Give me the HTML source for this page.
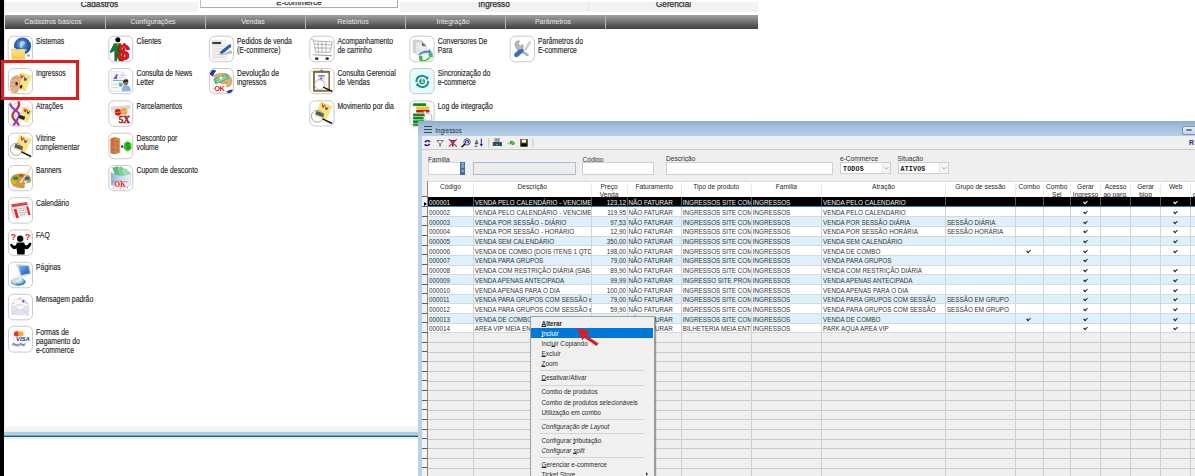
<!DOCTYPE html><html><head><meta charset="utf-8"><style>
*{margin:0;padding:0;box-sizing:border-box}
html,body{width:1195px;height:476px;overflow:hidden;background:#fff;font-family:"Liberation Sans", sans-serif;position:relative}
.a{position:absolute}
.t{position:absolute;white-space:nowrap;line-height:1}
.lbl{position:absolute;font-size:6.86px;line-height:7.4px;color:#262626;-webkit-text-stroke:0.12px #262626;white-space:nowrap;transform:scaleY(1.2);transform-origin:0 0}
.ib{position:absolute;width:25px;height:26px;border:1px solid #c9c9c9;border-radius:5px;background:#fff;overflow:hidden}
.ib svg{position:absolute;left:0;top:0}
.cat{position:absolute;top:15px;height:14px;font-size:7px;line-height:14px;color:#e4e8ec;text-align:center;padding-right:4px}
.row{position:absolute;left:427.5px;width:800px;height:9.72px}
.c{position:absolute;top:0;height:100%;font-size:6.3px;line-height:11.4px;color:#333;white-space:nowrap;overflow:hidden;padding-left:1.5px}
.hd{position:absolute;top:0;height:15.6px;font-size:6.6px;line-height:7.6px;color:#262626;text-align:center;padding-top:1.9px;overflow:hidden}
.mi{position:absolute;left:541.5px;font-size:6.4px;line-height:10px;color:#2b2b2b;white-space:nowrap;margin-top:1px}
.mi u{text-decoration-thickness:0.4px;text-underline-offset:0.3px}
.ms{position:absolute;left:539.5px;width:104px;height:1px;background:#d4d4d4}
</style></head><body>
<div class="a" style="left:0;top:0;width:4px;height:476px;background:#000"></div>
<div class="a" style="left:4px;top:0;width:1px;height:432px;background:#e3ecf7"></div>
<div class="a" style="left:5px;top:2px;width:193px;height:10px;background:#f2f2f2"></div>
<div class="a" style="left:400px;top:2px;width:188px;height:10px;background:#f2f2f2"></div>
<div class="a" style="left:589px;top:2px;width:169px;height:10px;background:#f2f2f2"></div>
<div class="a" style="left:588px;top:2px;width:1px;height:9px;background:#e4e4e4"></div>
<div class="a" style="left:200px;top:-2px;width:198px;height:10px;background:#fdfdfd;border:1px solid #ababab;border-top:none;border-left-color:#bdbdbd"></div>
<div class="a" style="left:5px;width:189px;top:1.8px;height:10.2px;overflow:hidden"><div class="t" style="left:0;width:189px;top:-1.1px;font-size:8.2px;color:#2e2e2e;-webkit-text-stroke:0.25px #2e2e2e;text-align:center">Cadastros</div></div>
<div class="a" style="left:201px;width:196px;top:1.7px;height:10.3px;overflow:hidden"><div class="t" style="left:0;width:196px;top:-3.2px;font-size:8px;color:#2e2e2e;-webkit-text-stroke:0.25px #2e2e2e;text-align:center">E-commerce</div></div>
<div class="a" style="left:400px;width:188px;top:1.8px;height:10.2px;overflow:hidden"><div class="t" style="left:0;width:188px;top:-1.1px;font-size:8.2px;color:#2e2e2e;-webkit-text-stroke:0.25px #2e2e2e;text-align:center">Ingresso</div></div>
<div class="a" style="left:589px;width:169px;top:1.8px;height:10.2px;overflow:hidden"><div class="t" style="left:0;width:169px;top:-1.1px;font-size:8.2px;color:#2e2e2e;-webkit-text-stroke:0.25px #2e2e2e;text-align:center">Gerencial</div></div>
<div class="a" style="left:5px;top:15px;width:753px;height:14px;background:linear-gradient(#a2a2a2 0%,#707070 50%,#3e3e3e 100%)"></div>
<div class="cat" style="left:5px;width:100px">Cadastros básicos</div>
<div class="cat" style="left:105px;width:100px">Configurações</div>
<div class="a" style="left:105px;top:15px;width:1px;height:14px;background:#b5b5b5"></div>
<div class="cat" style="left:205px;width:100px">Vendas</div>
<div class="a" style="left:205px;top:15px;width:1px;height:14px;background:#b5b5b5"></div>
<div class="cat" style="left:305px;width:100px">Relatórios</div>
<div class="a" style="left:305px;top:15px;width:1px;height:14px;background:#b5b5b5"></div>
<div class="cat" style="left:405px;width:100px">Integração</div>
<div class="a" style="left:405px;top:15px;width:1px;height:14px;background:#b5b5b5"></div>
<div class="cat" style="left:505px;width:100px">Parâmetros</div>
<div class="a" style="left:505px;top:15px;width:1px;height:14px;background:#b5b5b5"></div>
<div class="cat" style="left:605px;width:153px"></div>
<div class="a" style="left:605px;top:15px;width:1px;height:14px;background:#b5b5b5"></div>
<svg class="a" style="left:6px;top:34px" width="30" height="30" viewBox="0 0 476 476"><defs><clipPath id="cp00"><rect x="43" y="43" width="369" height="397" rx="70"/></clipPath></defs><rect x="35" y="35" width="385" height="413" rx="80" fill="#fff" stroke="#c6c6c6" stroke-width="15"/><g clip-path="url(#cp00)">
<defs><radialGradient id="g00" cx="0.45" cy="0.4" r="0.6"><stop offset="0" stop-color="#7fb3e6"/><stop offset="0.55" stop-color="#2a66b8"/><stop offset="1" stop-color="#163f80"/></radialGradient>
<linearGradient id="f00" x1="0" y1="0" x2="0" y2="1"><stop offset="0" stop-color="#fbe79a"/><stop offset="1" stop-color="#efc64a"/></linearGradient></defs>
<circle cx="262" cy="192" r="135" fill="url(#g00)"/>
<path d="M230 120 q40 -20 70 10 q10 30 -20 40 q-30 10 -20 40 q-30 30 -40 -10 q-10 -40 10 -80z" fill="#b8dbf5" opacity="0.85"/>
<path d="M300 230 q30 0 40 30 q-20 30 -45 10z" fill="#9ccbee" opacity="0.8"/>
<path d="M340 320 l40 10 l-10 30 l-40 -5z" fill="#9a9a9a"/>
<path d="M78 240 L150 228 L170 245 L285 238 L300 250 L305 400 L90 410 Z" fill="url(#f00)"/>
<path d="M78 240 L150 228 L170 245 L285 238 L300 255 L90 262 Z" fill="#f6d56a"/>
</g></svg>
<div class="lbl" style="left:36px;top:37.0px">Sistemas</div>
<svg class="a" style="left:6px;top:66px" width="30" height="30" viewBox="0 0 476 476"><defs><clipPath id="cp01"><rect x="46" y="48" width="366" height="384" rx="70"/></clipPath></defs><rect x="38" y="40" width="382" height="400" rx="80" fill="#fff" stroke="#c6c6c6" stroke-width="15"/><g clip-path="url(#cp01)">
<path d="M236 102 L414 156 L306 402 L148 350 Z" fill="#f6e47a"/>
<path d="M160 318 L300 372" stroke="#e0c850" stroke-width="5"/>
<path transform="translate(228,128) rotate(15) scale(1.05)" d="M0 0 L13 -4 L21 30 L30 12 L38 28 L46 2 L58 4 L42 62 L30 46 L20 62 Z" fill="#ee2a14"/><path transform="translate(285,172) rotate(15) scale(1.0)" d="M0 0 L13 -4 L21 30 L30 12 L38 28 L46 2 L58 4 L42 62 L30 46 L20 62 Z" fill="#2630d8"/>
<path d="M72 255 Q78 180 160 152 Q212 140 226 188 L222 262 Q214 372 168 424 Q108 440 76 390 Q56 330 72 255Z" fill="#e8b48a" stroke="#b07a50" stroke-width="7"/>
<path d="M98 205 Q150 180 200 198 M92 265 Q140 245 190 262 M90 325 Q130 310 170 322" stroke="#a87048" stroke-width="8" fill="none"/>
<ellipse cx="168" cy="282" rx="20" ry="28" fill="#2a2a12"/>
<ellipse cx="240" cy="330" rx="18" ry="30" fill="#1a1a10" transform="rotate(25 240 330)"/>
</g></svg>
<div class="lbl" style="left:36px;top:69.3px">Ingressos</div>
<svg class="a" style="left:6px;top:98px" width="30" height="30" viewBox="0 0 476 476"><defs><clipPath id="cp02"><rect x="46" y="53" width="366" height="384" rx="70"/></clipPath></defs><rect x="38" y="45" width="382" height="400" rx="80" fill="#fff" stroke="#c6c6c6" stroke-width="15"/><g clip-path="url(#cp02)">
<path d="M95 105 L185 80 M110 160 L165 150 M120 290 L180 280 M115 345 L170 350" stroke="#b8d4f0" stroke-width="16"/>
<path d="M150 120 L170 115 M140 310 L160 305" stroke="#f0d890" stroke-width="14"/>
<path d="M195 50 Q235 125 150 195 Q55 275 140 355 Q200 400 200 445" stroke="#d42a2a" stroke-width="36" fill="none"/>
<path d="M62 85 Q80 160 175 212 Q235 255 190 325 Q140 400 112 450" stroke="#8a3ad8" stroke-width="36" fill="none"/>
<path d="M268 140 L420 190 L345 390 L195 335 Z" fill="#f7e57c"/>
<path transform="translate(280,155) rotate(15) scale(1.1)" d="M0 0 L13 -4 L21 30 L30 12 L38 28 L46 2 L58 4 L42 62 L30 46 L20 62 Z" fill="#ee2a14"/><path transform="translate(330,192) rotate(15) scale(1.0)" d="M0 0 L13 -4 L21 30 L30 12 L38 28 L46 2 L58 4 L42 62 L30 46 L20 62 Z" fill="#2630d8"/>
<rect x="205" y="280" width="95" height="55" fill="#222" transform="rotate(20 250 305)"/>
</g></svg>
<div class="lbl" style="left:36px;top:101.6px">Atrações</div>
<svg class="a" style="left:6px;top:131px" width="30" height="30" viewBox="0 0 476 476"><defs><clipPath id="cp03"><rect x="46" y="43" width="366" height="389" rx="70"/></clipPath></defs><rect x="38" y="35" width="382" height="405" rx="80" fill="#fff" stroke="#c6c6c6" stroke-width="15"/><g clip-path="url(#cp03)">
<path d="M218 60 L410 125 L300 355 L120 290 Z" fill="#f7e57c"/>
<path transform="translate(235,85) rotate(15) scale(1.05)" d="M0 0 L13 -4 L21 30 L30 12 L38 28 L46 2 L58 4 L42 62 L30 46 L20 62 Z" fill="#e8261a"/><path transform="translate(290,130) rotate(15) scale(0.95)" d="M0 0 L13 -4 L21 30 L30 12 L38 28 L46 2 L58 4 L42 62 L30 46 L20 62 Z" fill="#2233cc"/>
<rect x="135" y="225" width="130" height="60" fill="#232318" transform="rotate(22 200 255)"/>
<circle cx="165" cy="290" r="95" fill="#fff" fill-opacity="0.25" stroke="#8a8a8a" stroke-width="12"/>
<path d="M255 335 L390 400" stroke="#1a1a1a" stroke-width="26" stroke-linecap="round"/>
</g></svg>
<div class="lbl" style="left:36px;top:133.89999999999998px">Vitrine<br>complementar</div>
<svg class="a" style="left:6px;top:163px" width="30" height="30" viewBox="0 0 476 476"><defs><clipPath id="cp04"><rect x="46" y="48" width="366" height="384" rx="70"/></clipPath></defs><rect x="38" y="40" width="382" height="400" rx="80" fill="#fff" stroke="#c6c6c6" stroke-width="15"/><g clip-path="url(#cp04)">
<path d="M70 270 Q70 170 230 165 Q390 165 400 260 Q405 320 330 320 Q280 320 300 370 Q300 410 230 400 Q70 380 70 270Z" fill="#c99a4e"/>
<ellipse cx="155" cy="240" rx="42" ry="26" fill="#119a1a"/>
<ellipse cx="240" cy="198" rx="40" ry="24" fill="#d2490e"/>
<ellipse cx="335" cy="240" rx="40" ry="24" fill="#1c5bd0"/>
<ellipse cx="120" cy="302" rx="40" ry="26" fill="#f0b800"/>
<ellipse cx="310" cy="300" rx="25" ry="18" fill="#eee8d8"/>
<path d="M390 85 L245 290" stroke="#f3dc7a" stroke-width="20" stroke-linecap="round"/>
<path d="M255 270 L235 305" stroke="#eee" stroke-width="26" stroke-linecap="round"/>
</g></svg>
<div class="lbl" style="left:36px;top:166.2px">Banners</div>
<svg class="a" style="left:6px;top:196px" width="30" height="30" viewBox="0 0 476 476"><defs><clipPath id="cp05"><rect x="46" y="33" width="366" height="389" rx="70"/></clipPath></defs><rect x="38" y="25" width="382" height="405" rx="80" fill="#fff" stroke="#c6c6c6" stroke-width="15"/><g clip-path="url(#cp05)">
<path d="M70 185 L98 172 L150 352 L120 345 Z" fill="#cfcfcf"/>
<path d="M98 172 L345 132 L388 300 L148 355 Z" fill="#ececec"/>
<path d="M82 132 L330 95 L348 138 L96 180 Z" fill="#e23a3a"/>
<path d="M88 150 L335 112" stroke="#f07070" stroke-width="8"/>
<path d="M122 212 L165 202 L205 345 L163 352 Z" fill="#e02c2c"/>
<path d="M318 168 L352 162 L390 298 L356 306 Z" fill="#e02c2c"/>
<g fill="#9a9a9a">
<rect x="200" y="195" width="18" height="14"/><rect x="230" y="191" width="18" height="14"/><rect x="260" y="187" width="18" height="14"/><rect x="290" y="183" width="18" height="14"/>
<rect x="208" y="228" width="18" height="14"/><rect x="238" y="224" width="18" height="14"/><rect x="268" y="220" width="18" height="14"/><rect x="298" y="216" width="18" height="14"/>
<rect x="216" y="262" width="18" height="14"/><rect x="246" y="258" width="18" height="14"/><rect x="276" y="254" width="18" height="14"/><rect x="306" y="250" width="18" height="14"/>
<rect x="224" y="296" width="18" height="14"/><rect x="254" y="292" width="18" height="14"/><rect x="284" y="288" width="18" height="14"/>
</g>
</g></svg>
<div class="lbl" style="left:36px;top:198.5px">Calendário</div>
<svg class="a" style="left:6px;top:228px" width="30" height="30" viewBox="0 0 476 476"><defs><clipPath id="cp06"><rect x="46" y="38" width="366" height="389" rx="70"/></clipPath></defs><rect x="38" y="30" width="382" height="405" rx="80" fill="#fff" stroke="#c6c6c6" stroke-width="15"/><g clip-path="url(#cp06)">
<circle cx="225" cy="170" r="50" fill="#000"/>
<path d="M170 232 L290 232 L300 300 L295 420 L180 420 L165 300 Z" fill="#000"/>
<path d="M65 265 Q80 235 110 270 Q140 300 175 250 L190 300 Q140 360 100 320 Q70 290 65 265Z" fill="#000"/>
<path d="M405 240 Q385 220 355 255 Q320 300 290 250 L275 300 Q320 360 360 320 Q400 280 405 240Z" fill="#000"/>
<text x="120" y="195" font-family="Liberation Sans" font-weight="bold" font-size="140" fill="#ee1111" text-anchor="middle">?</text>
<text x="345" y="185" font-family="Liberation Sans" font-weight="bold" font-size="140" fill="#ee1111" text-anchor="middle">?</text>
</g></svg>
<div class="lbl" style="left:36px;top:230.79999999999995px">FAQ</div>
<svg class="a" style="left:6px;top:260px" width="30" height="30" viewBox="0 0 476 476"><defs><clipPath id="cp07"><rect x="46" y="43" width="366" height="389" rx="70"/></clipPath></defs><rect x="38" y="35" width="382" height="405" rx="80" fill="#fff" stroke="#c6c6c6" stroke-width="15"/><g clip-path="url(#cp07)">
<defs><linearGradient id="s07" x1="0" y1="0" x2="1" y2="1"><stop offset="0" stop-color="#8cc4f4"/><stop offset="0.5" stop-color="#3e86d8"/><stop offset="1" stop-color="#1f5fb0"/></linearGradient>
<radialGradient id="b07" cx="0.45" cy="0.35" r="0.65"><stop offset="0" stop-color="#f4f8fa"/><stop offset="0.45" stop-color="#9fd4ea"/><stop offset="0.8" stop-color="#2f8fc8"/><stop offset="1" stop-color="#1d5f9e"/></radialGradient></defs>
<ellipse cx="195" cy="345" rx="118" ry="62" fill="url(#b07)"/>
<path d="M85 320 Q120 270 190 280 L150 390 Q90 370 85 320Z" fill="#d8dde2" opacity="0.8"/>
<path d="M158 68 L372 82 L398 228 L236 262 Z" fill="#e4e4e4" stroke="#c8c8c8" stroke-width="6"/>
<path d="M192 82 L356 96 L380 212 L242 242 Z" fill="url(#s07)"/>
<path d="M185 250 L240 245 L255 330 L205 340 Z" fill="#eaeaea" stroke="#c8c8c8" stroke-width="5"/>
</g></svg>
<div class="lbl" style="left:36px;top:263.09999999999997px">Páginas</div>
<svg class="a" style="left:6px;top:293px" width="30" height="30" viewBox="0 0 476 476"><defs><clipPath id="cp08"><rect x="46" y="28" width="366" height="389" rx="70"/></clipPath></defs><rect x="38" y="20" width="382" height="405" rx="80" fill="#fff" stroke="#c6c6c6" stroke-width="15"/><g clip-path="url(#cp08)">
<path d="M80 175 L220 60 L365 175 Z" fill="#d8d3dc"/>
<rect x="130" y="105" width="175" height="115" fill="#fbfbfb" stroke="#cfcfcf" stroke-width="6"/>
<circle cx="275" cy="132" r="20" fill="#a030d8"/>
<path d="M160 190 L270 185" stroke="#aaa" stroke-width="8"/>
<path d="M78 175 L225 260 L368 175 L368 360 L80 345 Z" fill="#e6e0ec"/>
<path d="M80 345 L210 240 M368 360 L240 245" stroke="#cdc5d6" stroke-width="8"/>
</g></svg>
<div class="lbl" style="left:36px;top:295.4px">Mensagem padrão</div>
<svg class="a" style="left:6px;top:325px" width="30" height="30" viewBox="0 0 476 476"><defs><clipPath id="cp09"><rect x="46" y="28" width="366" height="394" rx="70"/></clipPath></defs><rect x="38" y="20" width="382" height="410" rx="80" fill="#fff" stroke="#c6c6c6" stroke-width="15"/><g clip-path="url(#cp09)">
<rect x="95" y="80" width="210" height="100" fill="#f2f2f2"/>
<circle cx="170" cy="142" r="44" fill="#e8342a"/>
<circle cx="235" cy="142" r="44" fill="#f4a720" opacity="0.9"/>
<rect x="100" y="185" width="270" height="90" fill="#f6f6f6"/>
<text x="268" y="255" font-family="Liberation Sans" font-weight="bold" font-style="italic" font-size="95" fill="#1c3f9a" text-anchor="middle">VISA</text>
<rect x="95" y="280" width="230" height="80" fill="#f6f6f6"/>
<text x="200" y="340" font-family="Liberation Sans" font-weight="bold" font-style="italic" font-size="62" fill="#2b4f9a" text-anchor="middle">PayPal</text>
</g></svg>
<div class="lbl" style="left:36px;top:327.7px">Formas de<br>pagamento do<br>e-commerce</div>
<svg class="a" style="left:106px;top:34px" width="30" height="30" viewBox="0 0 476 476"><defs><clipPath id="cp10"><rect x="53" y="43" width="364" height="389" rx="70"/></clipPath></defs><rect x="45" y="35" width="380" height="405" rx="80" fill="#fff" stroke="#c6c6c6" stroke-width="15"/><g clip-path="url(#cp10)">
<circle cx="188" cy="92" r="40" fill="#000"/>
<path d="M128 145 L240 145 L250 430 L200 430 L190 330 L175 430 L135 430 L132 270 L78 300 L58 285 L118 165 Z" fill="#17763a"/>
<path d="M172 145 L200 145 L186 205 Z" fill="#ff7a1a"/>
<text x="275" y="410" font-family="Liberation Sans" font-weight="bold" font-size="350" fill="#ee1a1a" stroke="#c40e0e" stroke-width="16" text-anchor="middle" transform="rotate(8 275 300)">$</text>
<path d="M250 210 Q280 190 300 215" stroke="#ff8a8a" stroke-width="10" fill="none"/>
</g></svg>
<div class="lbl" style="left:136.5px;top:37.0px">Clientes</div>
<svg class="a" style="left:106px;top:66px" width="30" height="30" viewBox="0 0 476 476"><defs><clipPath id="cp11"><rect x="53" y="48" width="364" height="384" rx="70"/></clipPath></defs><rect x="45" y="40" width="380" height="400" rx="80" fill="#fff" stroke="#c6c6c6" stroke-width="15"/><g clip-path="url(#cp11)">
<path d="M85 85 L250 85 L320 150 L320 405 L85 405 Z" fill="#f7f7f7" stroke="#d0d0d0" stroke-width="6"/>
<path d="M250 85 L250 150 L320 150" fill="#e8e8e8" stroke="#cfcfcf" stroke-width="6"/>
<path d="M115 205 L165 125 L185 125 L175 205 Z" fill="#6b5be0"/>
<path d="M210 150 L280 150 M210 180 L280 180" stroke="#b8c8e8" stroke-width="10"/>
<rect x="110" y="220" width="170" height="18" fill="#6fbfb0"/>
<path d="M110 290 L200 290 M110 340 L200 340" stroke="#b8c8e0" stroke-width="10"/>
<rect x="205" y="262" width="55" height="60" fill="#6ab0dc"/>
<path d="M215 305 L240 285 L258 305 L258 322 L215 322 Z" fill="#5a9a50"/>
<path d="M250 400 Q245 330 290 310 L345 310 Q395 330 392 400 Z" fill="#86b6e0"/>
<ellipse cx="312" cy="262" rx="40" ry="48" fill="#a8703c"/>
<path d="M268 250 Q290 200 345 215 Q360 235 352 258 Q320 235 275 265Z" fill="#2a2a2a"/>
</g></svg>
<div class="lbl" style="left:136.5px;top:69.3px">Consulta de News<br>Letter</div>
<svg class="a" style="left:106px;top:98px" width="30" height="30" viewBox="0 0 476 476"><defs><clipPath id="cp12"><rect x="53" y="53" width="364" height="389" rx="70"/></clipPath></defs><rect x="45" y="45" width="380" height="405" rx="80" fill="#fff" stroke="#c6c6c6" stroke-width="15"/><g clip-path="url(#cp12)">
<path d="M75 140 L385 110 L385 175 L80 200 Z" fill="#d8d8d8"/>
<path d="M80 200 L385 175 L385 330 L90 335 Z" fill="#f0f0f0"/>
<circle cx="190" cy="228" r="52" fill="#d41a1a"/>
<circle cx="285" cy="212" r="55" fill="#f4a020" opacity="0.92"/>
<path d="M140 232 L330 212" stroke="#ffd8b0" stroke-width="8"/><text x="292" y="392" font-family="Liberation Serif" font-weight="bold" font-size="150" fill="#a8141a" stroke="#a8141a" stroke-width="6" text-anchor="middle">5X</text>
</g></svg>
<div class="lbl" style="left:136.5px;top:101.6px">Parcelamentos</div>
<svg class="a" style="left:106px;top:131px" width="30" height="30" viewBox="0 0 476 476"><defs><clipPath id="cp13"><rect x="53" y="43" width="364" height="389" rx="70"/></clipPath></defs><rect x="45" y="35" width="380" height="405" rx="80" fill="#fff" stroke="#c6c6c6" stroke-width="15"/><g clip-path="url(#cp13)">
<path d="M70 120 L135 100 L215 115 L215 345 L135 370 L70 355 Z" fill="#b07a2a"/>
<path d="M135 100 L215 115 L215 345 L135 370 Z" fill="#c8922e"/>
<ellipse cx="105" cy="180" rx="28" ry="18" fill="#f05a8a"/><ellipse cx="105" cy="255" rx="28" ry="18" fill="#f05a8a"/><ellipse cx="105" cy="325" rx="28" ry="18" fill="#f05a8a"/>
<ellipse cx="180" cy="165" rx="22" ry="28" fill="#f24f6a"/><ellipse cx="180" cy="235" rx="22" ry="28" fill="#f24f6a"/><ellipse cx="180" cy="305" rx="22" ry="28" fill="#f24f6a"/>
<rect x="240" y="230" width="35" height="35" fill="#333"/>
<path d="M345 165 L400 200 L400 285 L345 320 L290 285 L290 200 Z" fill="#33cc22" stroke="#22aa11" stroke-width="8"/>
<text x="345" y="285" font-family="Liberation Sans" font-weight="bold" font-size="130" fill="#118a11" text-anchor="middle">$</text>
</g></svg>
<div class="lbl" style="left:136.5px;top:133.89999999999998px">Desconto por<br>volume</div>
<svg class="a" style="left:106px;top:163px" width="30" height="30" viewBox="0 0 476 476"><defs><clipPath id="cp14"><rect x="53" y="48" width="364" height="384" rx="70"/></clipPath></defs><rect x="45" y="40" width="380" height="400" rx="80" fill="#fff" stroke="#c6c6c6" stroke-width="15"/><g clip-path="url(#cp14)">
<defs><linearGradient id="w14" x1="0" y1="0" x2="1" y2="0"><stop offset="0" stop-color="#8ab4dc"/><stop offset="0.5" stop-color="#c4dcf0"/><stop offset="1" stop-color="#e8f4fa"/></linearGradient></defs>
<path d="M105 75 L185 58 L245 175 L150 200 Z" fill="#5cc07a" stroke="#3a9a5a" stroke-width="6"/>
<path d="M170 78 L252 62 L305 180 L210 205 Z" fill="#7ed49a" stroke="#3a9a5a" stroke-width="6"/>
<path d="M235 92 L318 96 L392 165 L275 210 Z" fill="#9ee0b2" stroke="#3a9a5a" stroke-width="6"/>
<path d="M78 150 L230 215 L392 165 L388 355 L230 395 L82 350 Z" fill="url(#w14)" stroke="#8aa8c8" stroke-width="5"/>
<ellipse cx="225" cy="345" rx="105" ry="55" fill="#fff" opacity="0.6"/>
<text x="225" y="375" font-family="Liberation Serif" font-weight="bold" font-size="115" fill="#ee1111" text-anchor="middle">OK</text>
<g fill="#ee3333"><circle cx="110" cy="300" r="9"/><circle cx="120" cy="395" r="9"/><circle cx="330" cy="300" r="9"/><circle cx="340" cy="390" r="9"/><circle cx="225" cy="280" r="8"/><circle cx="225" cy="410" r="8"/><circle cx="170" cy="410" r="7"/><circle cx="280" cy="410" r="7"/></g>
</g></svg>
<div class="lbl" style="left:136.5px;top:166.2px">Cupom de desconto</div>
<svg class="a" style="left:206px;top:34px" width="30" height="30" viewBox="0 0 476 476"><defs><clipPath id="cp20"><rect x="63" y="43" width="364" height="389" rx="70"/></clipPath></defs><rect x="55" y="35" width="380" height="405" rx="80" fill="#fff" stroke="#c6c6c6" stroke-width="15"/><g clip-path="url(#cp20)">
<path d="M95 100 L305 95 L335 400 L110 405 Z" fill="#f4f4f4" stroke="#cfcfcf" stroke-width="6"/>
<rect x="100" y="125" width="140" height="35" fill="#3a3a3a"/>
<path d="M115 195 L300 190 M115 240 L305 235 M118 285 L300 280 M120 330 L300 325 M125 370 L300 365" stroke="#c0c0c0" stroke-width="8"/>
<path d="M400 250 L420 310 L240 340 Z" fill="#bdbdbd"/>
<path d="M395 165 Q410 190 390 210 L255 320 L215 290 L350 180 Q375 160 395 165Z" fill="#2a5fb8"/>
<path d="M220 285 L255 320 L210 335 Z" fill="#f0a828"/>
</g></svg>
<div class="lbl" style="left:237px;top:37.0px">Pedidos de venda<br>(E-commerce)</div>
<svg class="a" style="left:206px;top:66px" width="30" height="30" viewBox="0 0 476 476"><defs><clipPath id="cp21"><rect x="63" y="48" width="364" height="384" rx="70"/></clipPath></defs><rect x="55" y="40" width="380" height="400" rx="80" fill="#fff" stroke="#c6c6c6" stroke-width="15"/><g clip-path="url(#cp21)">
<path d="M62 135 Q60 80 120 55 L165 78 Q120 110 108 165 Z" fill="#1c3ca8"/>
<path d="M110 150 Q190 105 310 120 Q415 150 412 250 Q405 330 340 335 L170 240 Z" fill="#e6ae7c" stroke="#b8804e" stroke-width="6"/>
<path d="M118 210 L328 122 L362 196 L150 286 Z" fill="#58c07e" stroke="#2f9a58" stroke-width="6"/>
<path d="M160 222 L318 157 M175 250 L335 183" stroke="#d8f5e0" stroke-width="10"/>
<rect x="215" y="170" width="40" height="40" fill="#e6ffe8" transform="rotate(-23 235 190)"/>
<path d="M240 255 Q300 245 345 285" stroke="#b8804e" stroke-width="8" fill="none"/>
<path d="M328 405 Q380 365 428 372 L430 420 Q390 430 350 440 Z" fill="#1c3ca8"/>
<rect x="95" y="285" width="225" height="135" fill="#fff" opacity="0.8"/>
<text x="212" y="392" font-family="Liberation Sans" font-weight="bold" font-size="118" fill="#ee1111" text-anchor="middle" letter-spacing="-6">OK</text>
<g fill="#f04a4a"><circle cx="110" cy="300" r="8"/><circle cx="108" cy="350" r="8"/><circle cx="112" cy="400" r="8"/><circle cx="160" cy="415" r="7"/><circle cx="215" cy="418" r="7"/><circle cx="270" cy="415" r="7"/><circle cx="320" cy="400" r="8"/><circle cx="160" cy="290" r="7"/></g>
</g></svg>
<div class="lbl" style="left:237px;top:69.3px">Devolução de<br>ingressos</div>
<svg class="a" style="left:307px;top:34px" width="30" height="30" viewBox="0 0 476 476"><defs><clipPath id="cp30"><rect x="53" y="43" width="369" height="389" rx="70"/></clipPath></defs><rect x="45" y="35" width="385" height="405" rx="80" fill="#fff" stroke="#c6c6c6" stroke-width="15"/><g clip-path="url(#cp30)">
<g stroke="#8a8a8a" stroke-width="10" fill="none">
<path d="M60 90 L100 90 L140 290 L370 290 L400 125 L110 110"/>
<path d="M115 160 L390 170 M125 220 L380 225 M175 115 L180 290 M235 118 L240 290 M300 120 L300 290"/>
<path d="M100 330 L395 345" stroke="#9a9a9a" stroke-width="18"/>
</g>
<ellipse cx="155" cy="392" rx="28" ry="22" fill="#333"/>
<ellipse cx="320" cy="392" rx="28" ry="22" fill="#333"/>
</g></svg>
<div class="lbl" style="left:337.4px;top:37.0px">Acompanhamento<br>de carrinho</div>
<svg class="a" style="left:307px;top:66px" width="30" height="30" viewBox="0 0 476 476"><defs><clipPath id="cp31"><rect x="53" y="48" width="369" height="384" rx="70"/></clipPath></defs><rect x="45" y="40" width="385" height="400" rx="80" fill="#fff" stroke="#c6c6c6" stroke-width="15"/><g clip-path="url(#cp31)">
<rect x="95" y="75" width="270" height="335" rx="10" fill="#8a6a3a"/>
<rect x="125" y="110" width="215" height="270" fill="#fafafa"/>
<path d="M190 90 L230 50 L270 90 Z" fill="#6a6a6a"/>
<rect x="180" y="145" width="100" height="110" fill="#d8e8f8"/>
<rect x="180" y="145" width="100" height="22" fill="#4a80d0"/>
<circle cx="225" cy="200" r="18" fill="#e0402a"/><circle cx="205" cy="215" r="14" fill="#f0c030"/>
<circle cx="200" cy="295" r="78" fill="#fff" fill-opacity="0.8" stroke="#999" stroke-width="10"/>
<path d="M265 340 L395 400" stroke="#1a1a1a" stroke-width="24" stroke-linecap="round"/>
</g></svg>
<div class="lbl" style="left:337.4px;top:69.3px">Consulta Gerencial<br>de Vendas</div>
<svg class="a" style="left:307px;top:98px" width="30" height="30" viewBox="0 0 476 476"><defs><clipPath id="cp32"><rect x="53" y="53" width="369" height="384" rx="70"/></clipPath></defs><rect x="45" y="45" width="385" height="400" rx="80" fill="#fff" stroke="#c6c6c6" stroke-width="15"/><g clip-path="url(#cp32)">
<path d="M218 60 L410 125 L300 355 L120 290 Z" fill="#f7e57c"/>
<path transform="translate(235,85) rotate(15) scale(1.05)" d="M0 0 L13 -4 L21 30 L30 12 L38 28 L46 2 L58 4 L42 62 L30 46 L20 62 Z" fill="#e8261a"/><path transform="translate(290,130) rotate(15) scale(0.95)" d="M0 0 L13 -4 L21 30 L30 12 L38 28 L46 2 L58 4 L42 62 L30 46 L20 62 Z" fill="#2233cc"/>
<rect x="135" y="225" width="130" height="60" fill="#232318" transform="rotate(22 200 255)"/>
<circle cx="165" cy="290" r="95" fill="#fff" fill-opacity="0.25" stroke="#8a8a8a" stroke-width="12"/>
<path d="M255 335 L390 400" stroke="#1a1a1a" stroke-width="26" stroke-linecap="round"/>
</g></svg>
<div class="lbl" style="left:337.4px;top:101.6px">Movimento por dia</div>
<svg class="a" style="left:407px;top:34px" width="30" height="30" viewBox="0 0 476 476"><defs><clipPath id="cp40"><rect x="53" y="43" width="369" height="389" rx="70"/></clipPath></defs><rect x="45" y="35" width="385" height="405" rx="80" fill="#fff" stroke="#c6c6c6" stroke-width="15"/><g clip-path="url(#cp40)">
<path d="M95 95 L225 95 L300 165 L300 300 L95 300 Z" fill="#d4d4d4" stroke="#bcbcbc" stroke-width="5"/>
<path d="M140 125 L235 125 L310 195 L310 330 L140 330 Z" fill="#ececec" stroke="#c4c4c4" stroke-width="6"/>
<path d="M232 125 L240 190 L310 195 Z" fill="#6a6a6a"/>
<path d="M150 240 L200 240 M150 270 L220 270" stroke="#c8c8c8" stroke-width="8"/>
<path d="M180 335 Q220 255 350 262 L345 225 L395 290 L340 335 L345 300 Q240 290 200 345 Z" fill="#4a8ad0"/>
<path d="M200 405 Q320 430 360 345 L325 335 L405 295 L410 375 L380 360 Q330 450 200 430 Z" fill="#3cc03c"/>
<path d="M190 350 L245 345 L248 410 L195 415 Z" fill="#3cc03c"/>
</g></svg>
<div class="lbl" style="left:437.8px;top:37.0px">Conversores De<br>Para</div>
<svg class="a" style="left:407px;top:66px" width="30" height="30" viewBox="0 0 476 476"><defs><clipPath id="cp41"><rect x="53" y="48" width="369" height="384" rx="70"/></clipPath></defs><rect x="45" y="40" width="385" height="400" rx="80" fill="#e3fbfb" stroke="#c6c6c6" stroke-width="15"/><g clip-path="url(#cp41)">
<g fill="none" stroke="#1f8a85" stroke-width="30">
<path d="M150 255 A90 90 0 0 1 310 190"/>
<path d="M335 235 A90 90 0 0 1 175 300"/>
</g>
<path d="M280 160 L345 175 L320 230 Z" fill="#1f8a85"/>
<path d="M205 330 L140 315 L165 260 Z" fill="#1f8a85"/>
<circle cx="240" cy="245" r="45" fill="#1f8a85"/>
<text x="240" y="275" font-family="Liberation Sans" font-weight="bold" font-size="80" fill="#dff8f6" text-anchor="middle">$</text>
</g></svg>
<div class="lbl" style="left:437.8px;top:69.3px">Sincronização do<br>e-commerce</div>
<svg class="a" style="left:407px;top:98px" width="30" height="30" viewBox="0 0 476 476"><defs><clipPath id="cp42"><rect x="53" y="53" width="369" height="389" rx="70"/></clipPath></defs><rect x="45" y="45" width="385" height="405" rx="80" fill="#fff" stroke="#c6c6c6" stroke-width="15"/><g clip-path="url(#cp42)">
<rect x="95" y="84" width="210" height="42" rx="12" fill="#118a22"/>
<rect x="145" y="136" width="212" height="44" rx="12" fill="#dcd418"/>
<rect x="145" y="188" width="212" height="44" rx="12" fill="#dd1111"/>
<rect x="95" y="244" width="190" height="44" rx="12" fill="#118a22"/>
<rect x="95" y="298" width="175" height="44" rx="12" fill="#118a22"/>
<rect x="95" y="352" width="185" height="44" rx="12" fill="#118a22"/>
<rect x="95" y="406" width="185" height="44" rx="12" fill="#118a22"/>
<path d="M262 215 Q290 196 306 222 L312 252 Q362 238 388 268 L398 362 L302 362 L250 302 Q266 280 286 296 Z" fill="#f8f8f8" stroke="#8a8a8a" stroke-width="9"/>
</g></svg>
<div class="lbl" style="left:437.8px;top:101.6px">Log de integração</div>
<svg class="a" style="left:508px;top:34px" width="30" height="30" viewBox="0 0 476 476"><defs><clipPath id="cp50"><rect x="43" y="43" width="369" height="389" rx="70"/></clipPath></defs><rect x="35" y="35" width="385" height="405" rx="80" fill="#fff" stroke="#c6c6c6" stroke-width="15"/><g clip-path="url(#cp50)">
<path d="M110 160 Q120 100 185 110 L160 150 L190 190 L235 165 Q260 220 210 245 L330 330 L300 350 L180 260 Q120 250 110 160Z" fill="#b8b8b8" stroke="#8a8a8a" stroke-width="8"/>
<path d="M260 245 L335 120 L360 135 L285 260 Z" fill="#c8d8e8" stroke="#8fa2b8" stroke-width="6"/>
<path d="M95 335 Q100 300 175 245 L245 235 L250 275 Q200 330 150 365 Q95 375 95 335Z" fill="#3a6fc0"/>
</g></svg>
<div class="lbl" style="left:538px;top:37.0px">Parâmetros do<br>E-commerce</div>
<div class="a" style="left:1px;top:60px;width:78px;height:40px;border:3px solid #e31b1b"></div>
<div class="a" style="left:4px;top:426px;width:414px;height:6px;background:linear-gradient(#f7f7f7,#eeeeee)"></div>
<div class="a" style="left:4px;top:431.5px;width:414px;height:3.5px;background:#b3cbe5"></div>
<div class="a" style="left:4px;top:435px;width:414px;height:0.8px;background:#55b9d6"></div>
<div class="a" style="left:4px;top:435.8px;width:414px;height:1.3px;background:#2a5660"></div>
<div class="a" style="left:4px;top:437px;width:414px;height:2px;background:#f1eeee"></div>
<div class="a" style="left:418px;top:121px;width:800px;height:360px;background:#efefef"></div>
<div class="a" style="left:418px;top:121px;width:4px;height:360px;background:#b9d1ea"></div>
<div class="a" style="left:418px;top:121px;width:800px;height:15px;background:linear-gradient(#8fadcb,#a3bfdc 40%,#b7d0ea)"></div>
<div class="a" style="left:423.6px;top:125.9px;width:8px;height:0.95px;background:#3d4a5a"></div>
<div class="a" style="left:423.6px;top:129.1px;width:8px;height:0.95px;background:#3d4a5a"></div>
<div class="a" style="left:423.6px;top:132.3px;width:8px;height:0.95px;background:#3d4a5a"></div>
<div class="t" style="left:435.3px;top:126.6px;font-size:6.1px;color:#1f2d40;transform:scaleY(1.2);transform-origin:0 0">Ingressos</div>
<div class="a" style="left:1181.5px;top:125.7px;width:20px;height:9px;border:1px solid #7f95ad;border-radius:2px;background:linear-gradient(#e6eef7,#c2d4e8)"></div>
<div class="a" style="left:1185.5px;top:129.2px;width:6px;height:2.2px;border:0.8px solid #777;border-radius:1px;background:#e8e8e8"></div>
<div class="t" style="left:1189px;top:138.5px;font-size:7px;color:#2a2a90;font-weight:bold">R</div>
<svg class="a" style="left:418px;top:134px" width="120" height="18" viewBox="0 0 120 18">
<g fill="none" stroke="#1c1c8c" stroke-width="1.4">
<path d="M6.9 8.3 A3 2.6 0 0 1 11.6 7.2"/>
<path d="M11.6 9.9 A3 2.6 0 0 1 6.9 10.9"/>
</g>
<path d="M10.3 6.2 L12.6 7.4 L10.9 8.6 Z" fill="#1c1c8c"/>
<path d="M8.1 12 L6 10.8 L7.9 9.7 Z" fill="#1c1c8c"/>
<path d="M18.7 6.5 L25.5 6.5 L22.4 9.9 L22.4 12.2 L21.7 12.2 L21.7 9.9 Z" fill="none" stroke="#5a5a5a" stroke-width="0.75"/>
<path d="M31.5 6 L38.2 6 L35.6 9.6 L35.6 12.4 L34.1 12.4 L34.1 9.6 Z" fill="#1a2a8a"/>
<circle cx="34.9" cy="7.4" r="0.9" fill="#2a8ae8"/>
<path d="M30.9 5.1 L38.8 12.6 M38.8 5.1 L30.9 12.6" stroke="#ee2222" stroke-width="1.3"/>
<circle cx="49" cy="7.9" r="3.2" fill="#e4e4f4" stroke="#5a5a5a" stroke-width="1"/>
<path d="M47.7 9.6 L47.7 6.6 M47.7 7.2 Q49 6 50.3 7 L50.3 9.6" fill="none" stroke="#1c1cb8" stroke-width="1.1"/>
<path d="M46.6 10.4 L44 12.7" stroke="#111" stroke-width="1.5" stroke-linecap="round"/>
<text x="56.8" y="10" font-family="Liberation Sans" font-weight="bold" font-size="5" fill="#333">A</text>
<text x="56.8" y="13.4" font-family="Liberation Sans" font-weight="bold" font-size="4.5" fill="#333">Z</text>
<path d="M63.3 4.6 L63.3 11" stroke="#1c1cb0" stroke-width="1"/>
<path d="M61.7 10 L64.9 10 L63.3 12.7 Z" fill="#1c1cb0"/>
<rect x="70.2" y="4" width="0.9" height="9.5" fill="#c4c4c4"/>
<rect x="76.5" y="4.2" width="5.2" height="3.6" fill="#9a9a9a"/>
<path d="M74.8 8 L83.2 8 Q84 8 84 9 L84 12 L74.8 12 Z" fill="#1d5a5a"/>
<rect x="78" y="10.2" width="1.6" height="1.2" fill="#c8b820"/>
<ellipse cx="90.8" cy="9.3" rx="1.8" ry="1.2" fill="#c9c9c9"/>
<ellipse cx="94.2" cy="8.9" rx="2.6" ry="1.9" fill="#22aa22" transform="rotate(25 94.2 8.9)"/>
<ellipse cx="94.3" cy="8.8" rx="1.2" ry="0.8" fill="#66ee44"/>
<rect x="102.2" y="5.1" width="7.6" height="7.6" fill="#3c3c10"/>
<rect x="103.7" y="5.6" width="4.4" height="3" fill="#f4f4f4"/>
<rect x="103.3" y="9.8" width="5.6" height="2.5" fill="#000"/>
<rect x="114.4" y="4" width="0.9" height="9.5" fill="#c4c4c4"/>
</svg>
<div class="a" style="left:422px;top:149px;width:800px;height:1px;background:#c9c9c9"></div>
<div class="t" style="left:428px;top:156.5px;font-size:6.6px;color:#333">Família</div>
<div class="a" style="left:428px;top:162.3px;width:32.5px;height:12.5px;background:#fff;border:1px solid #d4d4d4;border-right:none"></div>
<div class="a" style="left:460.3px;top:162.3px;width:5.2px;height:12.5px;background:#3f6d9c"></div>
<svg class="a" style="left:460.3px;top:162.3px" width="5.2" height="12.5"><circle cx="2.6" cy="4.2" r="1.3" fill="none" stroke="#dfe8f2" stroke-width="0.7"/><path d="M1.5 8 L3.7 9.8 M1.5 9.8 L3.7 8" stroke="#dfe8f2" stroke-width="0.7"/><rect x="1.6" y="0.8" width="2" height="1.2" fill="#c8d6e6"/></svg>
<div class="a" style="left:473px;top:162.3px;width:103px;height:12.5px;background:#ececec;border:1px solid #a9bdd3"></div>
<div class="t" style="left:582.5px;top:156.5px;font-size:6.6px;color:#333">Código</div>
<div class="a" style="left:582.3px;top:162.3px;width:71.5px;height:12.5px;background:#fff;border:1px solid #cfcfcf"></div>
<div class="t" style="left:666px;top:156px;font-size:6.6px;color:#333">Descrição</div>
<div class="a" style="left:666px;top:162.3px;width:167px;height:12.5px;background:#fff;border:1px solid #cfcfcf"></div>
<div class="t" style="left:840px;top:156.2px;font-size:6.6px;color:#333">e-Commerce</div>
<div class="a" style="left:840px;top:162.3px;width:51px;height:12px;background:#fff;border:1px solid #cfcfcf"></div>
<div class="a" style="left:881.5px;top:163.3px;width:8.5px;height:10px;background:#f4f4f4;border-left:1px solid #e6e6e6"></div>
<svg class="a" style="left:882px;top:163px" width="9" height="10"><path d="M2.3 4.2 L4.3 6.2 L6.3 4.2" fill="none" stroke="#8a8a8a" stroke-width="0.7"/></svg>
<div class="t" style="left:843px;top:167px;font-size:6.6px;font-family:'Liberation Mono',monospace;font-weight:bold;color:#111;letter-spacing:0.2px">TODOS</div>
<div class="t" style="left:897.5px;top:156.2px;font-size:6.6px;color:#333">Situação</div>
<div class="a" style="left:897.5px;top:162.3px;width:51px;height:12px;background:#fff;border:1px solid #cfcfcf"></div>
<div class="a" style="left:939px;top:163.3px;width:8.5px;height:10px;background:#f4f4f4;border-left:1px solid #e6e6e6"></div>
<svg class="a" style="left:939.5px;top:163px" width="9" height="10"><path d="M2.3 4.2 L4.3 6.2 L6.3 4.2" fill="none" stroke="#8a8a8a" stroke-width="0.7"/></svg>
<div class="t" style="left:900.5px;top:167px;font-size:6.6px;font-family:'Liberation Mono',monospace;font-weight:bold;color:#111;letter-spacing:0.2px">ATIVOS</div>
<div class="a" style="left:422px;top:181.4px;width:800px;height:16.0px;background:#fff"></div>
<div class="a" style="left:422px;top:181.1px;width:800px;height:0.8px;background:#dcdcdc"></div>
<div class="hd" style="left:427.5px;top:181.4px;width:45.80000000000001px">Código</div>
<div class="a" style="left:472.8px;top:181.4px;width:1px;height:16.0px;background:#ececec"></div>
<div class="hd" style="left:473.3px;top:181.4px;width:117.90000000000003px">Descrição</div>
<div class="a" style="left:590.7px;top:181.4px;width:1px;height:16.0px;background:#ececec"></div>
<div class="hd" style="left:591.2px;top:181.4px;width:35.799999999999955px">Preço<br>Venda</div>
<div class="a" style="left:626.5px;top:181.4px;width:1px;height:16.0px;background:#ececec"></div>
<div class="hd" style="left:627px;top:181.4px;width:54.299999999999955px">Faturamento</div>
<div class="a" style="left:680.8px;top:181.4px;width:1px;height:16.0px;background:#ececec"></div>
<div class="hd" style="left:681.3px;top:181.4px;width:70.0px">Tipo de produto</div>
<div class="a" style="left:750.8px;top:181.4px;width:1px;height:16.0px;background:#ececec"></div>
<div class="hd" style="left:751.3px;top:181.4px;width:70.20000000000005px">Familia</div>
<div class="a" style="left:821.0px;top:181.4px;width:1px;height:16.0px;background:#ececec"></div>
<div class="hd" style="left:821.5px;top:181.4px;width:123.89999999999998px">Atração</div>
<div class="a" style="left:944.9px;top:181.4px;width:1px;height:16.0px;background:#ececec"></div>
<div class="hd" style="left:945.4px;top:181.4px;width:70.0px">Grupo de sessão</div>
<div class="a" style="left:1014.9px;top:181.4px;width:1px;height:16.0px;background:#ececec"></div>
<div class="hd" style="left:1015.4px;top:181.4px;width:27.600000000000023px">Combo</div>
<div class="a" style="left:1042.5px;top:181.4px;width:1px;height:16.0px;background:#ececec"></div>
<div class="hd" style="left:1043px;top:181.4px;width:27.5px">Combo<br>Sel</div>
<div class="a" style="left:1070.0px;top:181.4px;width:1px;height:16.0px;background:#ececec"></div>
<div class="hd" style="left:1070.5px;top:181.4px;width:30.0px">Gerar<br>Ingresso</div>
<div class="a" style="left:1100.0px;top:181.4px;width:1px;height:16.0px;background:#ececec"></div>
<div class="hd" style="left:1100.5px;top:181.4px;width:30.09999999999991px">Acesso<br>ao parq.</div>
<div class="a" style="left:1130.1px;top:181.4px;width:1px;height:16.0px;background:#ececec"></div>
<div class="hd" style="left:1130.6px;top:181.4px;width:30.0px">Gerar<br>blog</div>
<div class="a" style="left:1160.1px;top:181.4px;width:1px;height:16.0px;background:#ececec"></div>
<div class="hd" style="left:1160.6px;top:181.4px;width:30.200000000000045px">Web</div>
<div class="a" style="left:1190.3px;top:181.4px;width:1px;height:16.0px;background:#ececec"></div>
<div class="hd" style="left:1190.8px;top:181.4px;width:39.200000000000045px"><span style="position:absolute;left:2px;top:9.3px">c</span></div>
<div class="a" style="left:1229.5px;top:181.4px;width:1px;height:16.0px;background:#ececec"></div>
<div class="a" style="left:422px;top:181.4px;width:5.5px;height:16.0px;background:#f0f0f0;border-right:1.4px solid #8a8a8a;border-bottom:1px solid #5e5e5e"></div>
<div class="a" style="left:427.5px;top:197.4px;width:800px;height:9.68px;background:#000"></div>
<div class="a" style="left:427.5px;top:207.08px;width:800px;height:9.68px;background:#fff"></div>
<div class="a" style="left:427.5px;top:216.76px;width:800px;height:9.68px;background:#ddf1fc"></div>
<div class="a" style="left:427.5px;top:226.44px;width:800px;height:9.68px;background:#fff"></div>
<div class="a" style="left:427.5px;top:236.12px;width:800px;height:9.68px;background:#ddf1fc"></div>
<div class="a" style="left:427.5px;top:245.8px;width:800px;height:9.68px;background:#fff"></div>
<div class="a" style="left:427.5px;top:255.48000000000002px;width:800px;height:9.68px;background:#ddf1fc"></div>
<div class="a" style="left:427.5px;top:265.15999999999997px;width:800px;height:9.68px;background:#fff"></div>
<div class="a" style="left:427.5px;top:274.84000000000003px;width:800px;height:9.68px;background:#ddf1fc"></div>
<div class="a" style="left:427.5px;top:284.52px;width:800px;height:9.68px;background:#fff"></div>
<div class="a" style="left:427.5px;top:294.2px;width:800px;height:9.68px;background:#ddf1fc"></div>
<div class="a" style="left:427.5px;top:303.88px;width:800px;height:9.68px;background:#fff"></div>
<div class="a" style="left:427.5px;top:313.56px;width:800px;height:9.68px;background:#ddf1fc"></div>
<div class="a" style="left:427.5px;top:323.24px;width:800px;height:9.68px;background:#fff"></div>
<div class="a" style="left:427.5px;top:206.48000000000002px;width:800px;height:0.9px;background:#3a7cc0"></div>
<div class="a" style="left:427.5px;top:216.16000000000003px;width:800px;height:0.9px;background:#d9d9d9"></div>
<div class="a" style="left:427.5px;top:225.84px;width:800px;height:0.9px;background:#d9d9d9"></div>
<div class="a" style="left:427.5px;top:235.52px;width:800px;height:0.9px;background:#d9d9d9"></div>
<div class="a" style="left:427.5px;top:245.20000000000002px;width:800px;height:0.9px;background:#d9d9d9"></div>
<div class="a" style="left:427.5px;top:254.88000000000002px;width:800px;height:0.9px;background:#d9d9d9"></div>
<div class="a" style="left:427.5px;top:264.56px;width:800px;height:0.9px;background:#d9d9d9"></div>
<div class="a" style="left:427.5px;top:274.23999999999995px;width:800px;height:0.9px;background:#d9d9d9"></div>
<div class="a" style="left:427.5px;top:283.92px;width:800px;height:0.9px;background:#d9d9d9"></div>
<div class="a" style="left:427.5px;top:293.59999999999997px;width:800px;height:0.9px;background:#d9d9d9"></div>
<div class="a" style="left:427.5px;top:303.28px;width:800px;height:0.9px;background:#d9d9d9"></div>
<div class="a" style="left:427.5px;top:312.96px;width:800px;height:0.9px;background:#d9d9d9"></div>
<div class="a" style="left:427.5px;top:322.64px;width:800px;height:0.9px;background:#d9d9d9"></div>
<div class="a" style="left:427.5px;top:332.32px;width:800px;height:0.9px;background:#d9d9d9"></div>
<div class="c" style="left:427.5px;top:197.4px;width:45.80000000000001px;color:#f2f2f2;">000001</div>
<div class="c" style="left:473.3px;top:197.4px;width:117.90000000000003px;color:#f2f2f2;">VENDA PELO CALENDÁRIO - VENCIMENTO</div>
<div class="c" style="left:591.2px;top:197.4px;width:35.799999999999955px;color:#f2f2f2;text-align:right;padding-right:1px;">123,12</div>
<div class="c" style="left:627px;top:197.4px;width:54.299999999999955px;color:#f2f2f2;">NÃO FATURAR</div>
<div class="c" style="left:681.3px;top:197.4px;width:70.0px;color:#f2f2f2;">INGRESSOS SITE COMUM</div>
<div class="c" style="left:751.3px;top:197.4px;width:70.20000000000005px;color:#f2f2f2;">INGRESSOS</div>
<div class="c" style="left:821.5px;top:197.4px;width:123.89999999999998px;color:#f2f2f2;">VENDA PELO CALENDARIO</div>
<div class="c" style="left:945.4px;top:197.4px;width:70.0px;color:#f2f2f2;"></div>
<div class="a" style="left:1070.5px;top:197.4px;width:30.0px;height:9.68px"><svg width="6" height="9" viewBox="0 0 6 9" style="position:absolute;left:50%;top:0;margin-left:-3px"><path d="M0.1 5.3 L1.3 4.5 L2.1 5.7 L4.3 3.7 L4.9 4.3 L2.1 7.5 Z" fill="#fff"/></svg></div>
<div class="a" style="left:1160.6px;top:197.4px;width:30.200000000000045px;height:9.68px"><svg width="6" height="9" viewBox="0 0 6 9" style="position:absolute;left:50%;top:0;margin-left:-3px"><path d="M0.1 5.3 L1.3 4.5 L2.1 5.7 L4.3 3.7 L4.9 4.3 L2.1 7.5 Z" fill="#fff"/></svg></div>
<div class="a" style="left:472.8px;top:197.4px;width:1px;height:9.68px;background:#555"></div>
<div class="a" style="left:590.7px;top:197.4px;width:1px;height:9.68px;background:#555"></div>
<div class="a" style="left:626.5px;top:197.4px;width:1px;height:9.68px;background:#555"></div>
<div class="a" style="left:680.8px;top:197.4px;width:1px;height:9.68px;background:#555"></div>
<div class="a" style="left:750.8px;top:197.4px;width:1px;height:9.68px;background:#555"></div>
<div class="a" style="left:821.0px;top:197.4px;width:1px;height:9.68px;background:#555"></div>
<div class="a" style="left:944.9px;top:197.4px;width:1px;height:9.68px;background:#555"></div>
<div class="a" style="left:1014.9px;top:197.4px;width:1px;height:9.68px;background:#555"></div>
<div class="a" style="left:1042.5px;top:197.4px;width:1px;height:9.68px;background:#555"></div>
<div class="a" style="left:1070.0px;top:197.4px;width:1px;height:9.68px;background:#555"></div>
<div class="a" style="left:1100.0px;top:197.4px;width:1px;height:9.68px;background:#555"></div>
<div class="a" style="left:1130.1px;top:197.4px;width:1px;height:9.68px;background:#555"></div>
<div class="a" style="left:1160.1px;top:197.4px;width:1px;height:9.68px;background:#555"></div>
<div class="a" style="left:1190.3px;top:197.4px;width:1px;height:9.68px;background:#555"></div>
<div class="c" style="left:427.5px;top:207.08px;width:45.80000000000001px;color:#333;">000002</div>
<div class="c" style="left:473.3px;top:207.08px;width:117.90000000000003px;color:#333;">VENDA PELO CALENDÁRIO - VENCIMENTO</div>
<div class="c" style="left:591.2px;top:207.08px;width:35.799999999999955px;color:#333;text-align:right;padding-right:1px;">119,95</div>
<div class="c" style="left:627px;top:207.08px;width:54.299999999999955px;color:#333;">NÃO FATURAR</div>
<div class="c" style="left:681.3px;top:207.08px;width:70.0px;color:#333;">INGRESSOS SITE COMUM</div>
<div class="c" style="left:751.3px;top:207.08px;width:70.20000000000005px;color:#333;">INGRESSOS</div>
<div class="c" style="left:821.5px;top:207.08px;width:123.89999999999998px;color:#333;">VENDA PELO CALENDARIO</div>
<div class="c" style="left:945.4px;top:207.08px;width:70.0px;color:#333;"></div>
<div class="a" style="left:1070.5px;top:207.08px;width:30.0px;height:9.68px"><svg width="6" height="9" viewBox="0 0 6 9" style="position:absolute;left:50%;top:0;margin-left:-3px"><path d="M0.1 5.3 L1.3 4.5 L2.1 5.7 L4.3 3.7 L4.9 4.3 L2.1 7.5 Z" fill="#222"/></svg></div>
<div class="a" style="left:1160.6px;top:207.08px;width:30.200000000000045px;height:9.68px"><svg width="6" height="9" viewBox="0 0 6 9" style="position:absolute;left:50%;top:0;margin-left:-3px"><path d="M0.1 5.3 L1.3 4.5 L2.1 5.7 L4.3 3.7 L4.9 4.3 L2.1 7.5 Z" fill="#222"/></svg></div>
<div class="a" style="left:472.8px;top:207.08px;width:1px;height:9.68px;background:#d4d4d4"></div>
<div class="a" style="left:590.7px;top:207.08px;width:1px;height:9.68px;background:#d4d4d4"></div>
<div class="a" style="left:626.5px;top:207.08px;width:1px;height:9.68px;background:#d4d4d4"></div>
<div class="a" style="left:680.8px;top:207.08px;width:1px;height:9.68px;background:#d4d4d4"></div>
<div class="a" style="left:750.8px;top:207.08px;width:1px;height:9.68px;background:#d4d4d4"></div>
<div class="a" style="left:821.0px;top:207.08px;width:1px;height:9.68px;background:#d4d4d4"></div>
<div class="a" style="left:944.9px;top:207.08px;width:1px;height:9.68px;background:#d4d4d4"></div>
<div class="a" style="left:1014.9px;top:207.08px;width:1px;height:9.68px;background:#d4d4d4"></div>
<div class="a" style="left:1042.5px;top:207.08px;width:1px;height:9.68px;background:#d4d4d4"></div>
<div class="a" style="left:1070.0px;top:207.08px;width:1px;height:9.68px;background:#d4d4d4"></div>
<div class="a" style="left:1100.0px;top:207.08px;width:1px;height:9.68px;background:#d4d4d4"></div>
<div class="a" style="left:1130.1px;top:207.08px;width:1px;height:9.68px;background:#d4d4d4"></div>
<div class="a" style="left:1160.1px;top:207.08px;width:1px;height:9.68px;background:#d4d4d4"></div>
<div class="a" style="left:1190.3px;top:207.08px;width:1px;height:9.68px;background:#d4d4d4"></div>
<div class="c" style="left:427.5px;top:216.76px;width:45.80000000000001px;color:#333;">000003</div>
<div class="c" style="left:473.3px;top:216.76px;width:117.90000000000003px;color:#333;">VENDA POR SESSÃO - DIÁRIO</div>
<div class="c" style="left:591.2px;top:216.76px;width:35.799999999999955px;color:#333;text-align:right;padding-right:1px;">97,53</div>
<div class="c" style="left:627px;top:216.76px;width:54.299999999999955px;color:#333;">NÃO FATURAR</div>
<div class="c" style="left:681.3px;top:216.76px;width:70.0px;color:#333;">INGRESSOS SITE COMUM</div>
<div class="c" style="left:751.3px;top:216.76px;width:70.20000000000005px;color:#333;">INGRESSOS</div>
<div class="c" style="left:821.5px;top:216.76px;width:123.89999999999998px;color:#333;">VENDA POR SESSÃO DIÁRIA</div>
<div class="c" style="left:945.4px;top:216.76px;width:70.0px;color:#333;">SESSÃO DIÁRIA</div>
<div class="a" style="left:1070.5px;top:216.76px;width:30.0px;height:9.68px"><svg width="6" height="9" viewBox="0 0 6 9" style="position:absolute;left:50%;top:0;margin-left:-3px"><path d="M0.1 5.3 L1.3 4.5 L2.1 5.7 L4.3 3.7 L4.9 4.3 L2.1 7.5 Z" fill="#222"/></svg></div>
<div class="a" style="left:1160.6px;top:216.76px;width:30.200000000000045px;height:9.68px"><svg width="6" height="9" viewBox="0 0 6 9" style="position:absolute;left:50%;top:0;margin-left:-3px"><path d="M0.1 5.3 L1.3 4.5 L2.1 5.7 L4.3 3.7 L4.9 4.3 L2.1 7.5 Z" fill="#222"/></svg></div>
<div class="a" style="left:472.8px;top:216.76px;width:1px;height:9.68px;background:#d4d4d4"></div>
<div class="a" style="left:590.7px;top:216.76px;width:1px;height:9.68px;background:#d4d4d4"></div>
<div class="a" style="left:626.5px;top:216.76px;width:1px;height:9.68px;background:#d4d4d4"></div>
<div class="a" style="left:680.8px;top:216.76px;width:1px;height:9.68px;background:#d4d4d4"></div>
<div class="a" style="left:750.8px;top:216.76px;width:1px;height:9.68px;background:#d4d4d4"></div>
<div class="a" style="left:821.0px;top:216.76px;width:1px;height:9.68px;background:#d4d4d4"></div>
<div class="a" style="left:944.9px;top:216.76px;width:1px;height:9.68px;background:#d4d4d4"></div>
<div class="a" style="left:1014.9px;top:216.76px;width:1px;height:9.68px;background:#d4d4d4"></div>
<div class="a" style="left:1042.5px;top:216.76px;width:1px;height:9.68px;background:#d4d4d4"></div>
<div class="a" style="left:1070.0px;top:216.76px;width:1px;height:9.68px;background:#d4d4d4"></div>
<div class="a" style="left:1100.0px;top:216.76px;width:1px;height:9.68px;background:#d4d4d4"></div>
<div class="a" style="left:1130.1px;top:216.76px;width:1px;height:9.68px;background:#d4d4d4"></div>
<div class="a" style="left:1160.1px;top:216.76px;width:1px;height:9.68px;background:#d4d4d4"></div>
<div class="a" style="left:1190.3px;top:216.76px;width:1px;height:9.68px;background:#d4d4d4"></div>
<div class="c" style="left:427.5px;top:226.44px;width:45.80000000000001px;color:#333;">000004</div>
<div class="c" style="left:473.3px;top:226.44px;width:117.90000000000003px;color:#333;">VENDA POR SESSÃO - HORÁRIO</div>
<div class="c" style="left:591.2px;top:226.44px;width:35.799999999999955px;color:#333;text-align:right;padding-right:1px;">12,90</div>
<div class="c" style="left:627px;top:226.44px;width:54.299999999999955px;color:#333;">NÃO FATURAR</div>
<div class="c" style="left:681.3px;top:226.44px;width:70.0px;color:#333;">INGRESSOS SITE COMUM</div>
<div class="c" style="left:751.3px;top:226.44px;width:70.20000000000005px;color:#333;">INGRESSOS</div>
<div class="c" style="left:821.5px;top:226.44px;width:123.89999999999998px;color:#333;">VENDA POR SESSÃO HORÁRIA</div>
<div class="c" style="left:945.4px;top:226.44px;width:70.0px;color:#333;">SESSÃO HORÁRIA</div>
<div class="a" style="left:1070.5px;top:226.44px;width:30.0px;height:9.68px"><svg width="6" height="9" viewBox="0 0 6 9" style="position:absolute;left:50%;top:0;margin-left:-3px"><path d="M0.1 5.3 L1.3 4.5 L2.1 5.7 L4.3 3.7 L4.9 4.3 L2.1 7.5 Z" fill="#222"/></svg></div>
<div class="a" style="left:1160.6px;top:226.44px;width:30.200000000000045px;height:9.68px"><svg width="6" height="9" viewBox="0 0 6 9" style="position:absolute;left:50%;top:0;margin-left:-3px"><path d="M0.1 5.3 L1.3 4.5 L2.1 5.7 L4.3 3.7 L4.9 4.3 L2.1 7.5 Z" fill="#222"/></svg></div>
<div class="a" style="left:472.8px;top:226.44px;width:1px;height:9.68px;background:#d4d4d4"></div>
<div class="a" style="left:590.7px;top:226.44px;width:1px;height:9.68px;background:#d4d4d4"></div>
<div class="a" style="left:626.5px;top:226.44px;width:1px;height:9.68px;background:#d4d4d4"></div>
<div class="a" style="left:680.8px;top:226.44px;width:1px;height:9.68px;background:#d4d4d4"></div>
<div class="a" style="left:750.8px;top:226.44px;width:1px;height:9.68px;background:#d4d4d4"></div>
<div class="a" style="left:821.0px;top:226.44px;width:1px;height:9.68px;background:#d4d4d4"></div>
<div class="a" style="left:944.9px;top:226.44px;width:1px;height:9.68px;background:#d4d4d4"></div>
<div class="a" style="left:1014.9px;top:226.44px;width:1px;height:9.68px;background:#d4d4d4"></div>
<div class="a" style="left:1042.5px;top:226.44px;width:1px;height:9.68px;background:#d4d4d4"></div>
<div class="a" style="left:1070.0px;top:226.44px;width:1px;height:9.68px;background:#d4d4d4"></div>
<div class="a" style="left:1100.0px;top:226.44px;width:1px;height:9.68px;background:#d4d4d4"></div>
<div class="a" style="left:1130.1px;top:226.44px;width:1px;height:9.68px;background:#d4d4d4"></div>
<div class="a" style="left:1160.1px;top:226.44px;width:1px;height:9.68px;background:#d4d4d4"></div>
<div class="a" style="left:1190.3px;top:226.44px;width:1px;height:9.68px;background:#d4d4d4"></div>
<div class="c" style="left:427.5px;top:236.12px;width:45.80000000000001px;color:#333;">000005</div>
<div class="c" style="left:473.3px;top:236.12px;width:117.90000000000003px;color:#333;">VENDA SEM CALENDÁRIO</div>
<div class="c" style="left:591.2px;top:236.12px;width:35.799999999999955px;color:#333;text-align:right;padding-right:1px;">350,00</div>
<div class="c" style="left:627px;top:236.12px;width:54.299999999999955px;color:#333;">NÃO FATURAR</div>
<div class="c" style="left:681.3px;top:236.12px;width:70.0px;color:#333;">INGRESSOS SITE COMUM</div>
<div class="c" style="left:751.3px;top:236.12px;width:70.20000000000005px;color:#333;">INGRESSOS</div>
<div class="c" style="left:821.5px;top:236.12px;width:123.89999999999998px;color:#333;">VENDA SEM CALENDÁRIO</div>
<div class="c" style="left:945.4px;top:236.12px;width:70.0px;color:#333;"></div>
<div class="a" style="left:1070.5px;top:236.12px;width:30.0px;height:9.68px"><svg width="6" height="9" viewBox="0 0 6 9" style="position:absolute;left:50%;top:0;margin-left:-3px"><path d="M0.1 5.3 L1.3 4.5 L2.1 5.7 L4.3 3.7 L4.9 4.3 L2.1 7.5 Z" fill="#222"/></svg></div>
<div class="a" style="left:1160.6px;top:236.12px;width:30.200000000000045px;height:9.68px"><svg width="6" height="9" viewBox="0 0 6 9" style="position:absolute;left:50%;top:0;margin-left:-3px"><path d="M0.1 5.3 L1.3 4.5 L2.1 5.7 L4.3 3.7 L4.9 4.3 L2.1 7.5 Z" fill="#222"/></svg></div>
<div class="a" style="left:472.8px;top:236.12px;width:1px;height:9.68px;background:#d4d4d4"></div>
<div class="a" style="left:590.7px;top:236.12px;width:1px;height:9.68px;background:#d4d4d4"></div>
<div class="a" style="left:626.5px;top:236.12px;width:1px;height:9.68px;background:#d4d4d4"></div>
<div class="a" style="left:680.8px;top:236.12px;width:1px;height:9.68px;background:#d4d4d4"></div>
<div class="a" style="left:750.8px;top:236.12px;width:1px;height:9.68px;background:#d4d4d4"></div>
<div class="a" style="left:821.0px;top:236.12px;width:1px;height:9.68px;background:#d4d4d4"></div>
<div class="a" style="left:944.9px;top:236.12px;width:1px;height:9.68px;background:#d4d4d4"></div>
<div class="a" style="left:1014.9px;top:236.12px;width:1px;height:9.68px;background:#d4d4d4"></div>
<div class="a" style="left:1042.5px;top:236.12px;width:1px;height:9.68px;background:#d4d4d4"></div>
<div class="a" style="left:1070.0px;top:236.12px;width:1px;height:9.68px;background:#d4d4d4"></div>
<div class="a" style="left:1100.0px;top:236.12px;width:1px;height:9.68px;background:#d4d4d4"></div>
<div class="a" style="left:1130.1px;top:236.12px;width:1px;height:9.68px;background:#d4d4d4"></div>
<div class="a" style="left:1160.1px;top:236.12px;width:1px;height:9.68px;background:#d4d4d4"></div>
<div class="a" style="left:1190.3px;top:236.12px;width:1px;height:9.68px;background:#d4d4d4"></div>
<div class="c" style="left:427.5px;top:245.8px;width:45.80000000000001px;color:#333;">000006</div>
<div class="c" style="left:473.3px;top:245.8px;width:117.90000000000003px;color:#333;">VENDA DE COMBO (DOIS ITENS 1 QTD)</div>
<div class="c" style="left:591.2px;top:245.8px;width:35.799999999999955px;color:#333;text-align:right;padding-right:1px;">198,00</div>
<div class="c" style="left:627px;top:245.8px;width:54.299999999999955px;color:#333;">NÃO FATURAR</div>
<div class="c" style="left:681.3px;top:245.8px;width:70.0px;color:#333;">INGRESSOS SITE COMUM</div>
<div class="c" style="left:751.3px;top:245.8px;width:70.20000000000005px;color:#333;">INGRESSOS</div>
<div class="c" style="left:821.5px;top:245.8px;width:123.89999999999998px;color:#333;">VENDA DE COMBO</div>
<div class="c" style="left:945.4px;top:245.8px;width:70.0px;color:#333;"></div>
<div class="a" style="left:1015.4px;top:245.8px;width:27.600000000000023px;height:9.68px"><svg width="6" height="9" viewBox="0 0 6 9" style="position:absolute;left:50%;top:0;margin-left:-3px"><path d="M0.1 5.3 L1.3 4.5 L2.1 5.7 L4.3 3.7 L4.9 4.3 L2.1 7.5 Z" fill="#222"/></svg></div>
<div class="a" style="left:1070.5px;top:245.8px;width:30.0px;height:9.68px"><svg width="6" height="9" viewBox="0 0 6 9" style="position:absolute;left:50%;top:0;margin-left:-3px"><path d="M0.1 5.3 L1.3 4.5 L2.1 5.7 L4.3 3.7 L4.9 4.3 L2.1 7.5 Z" fill="#222"/></svg></div>
<div class="a" style="left:1160.6px;top:245.8px;width:30.200000000000045px;height:9.68px"><svg width="6" height="9" viewBox="0 0 6 9" style="position:absolute;left:50%;top:0;margin-left:-3px"><path d="M0.1 5.3 L1.3 4.5 L2.1 5.7 L4.3 3.7 L4.9 4.3 L2.1 7.5 Z" fill="#222"/></svg></div>
<div class="a" style="left:472.8px;top:245.8px;width:1px;height:9.68px;background:#d4d4d4"></div>
<div class="a" style="left:590.7px;top:245.8px;width:1px;height:9.68px;background:#d4d4d4"></div>
<div class="a" style="left:626.5px;top:245.8px;width:1px;height:9.68px;background:#d4d4d4"></div>
<div class="a" style="left:680.8px;top:245.8px;width:1px;height:9.68px;background:#d4d4d4"></div>
<div class="a" style="left:750.8px;top:245.8px;width:1px;height:9.68px;background:#d4d4d4"></div>
<div class="a" style="left:821.0px;top:245.8px;width:1px;height:9.68px;background:#d4d4d4"></div>
<div class="a" style="left:944.9px;top:245.8px;width:1px;height:9.68px;background:#d4d4d4"></div>
<div class="a" style="left:1014.9px;top:245.8px;width:1px;height:9.68px;background:#d4d4d4"></div>
<div class="a" style="left:1042.5px;top:245.8px;width:1px;height:9.68px;background:#d4d4d4"></div>
<div class="a" style="left:1070.0px;top:245.8px;width:1px;height:9.68px;background:#d4d4d4"></div>
<div class="a" style="left:1100.0px;top:245.8px;width:1px;height:9.68px;background:#d4d4d4"></div>
<div class="a" style="left:1130.1px;top:245.8px;width:1px;height:9.68px;background:#d4d4d4"></div>
<div class="a" style="left:1160.1px;top:245.8px;width:1px;height:9.68px;background:#d4d4d4"></div>
<div class="a" style="left:1190.3px;top:245.8px;width:1px;height:9.68px;background:#d4d4d4"></div>
<div class="c" style="left:427.5px;top:255.48000000000002px;width:45.80000000000001px;color:#333;">000007</div>
<div class="c" style="left:473.3px;top:255.48000000000002px;width:117.90000000000003px;color:#333;">VENDA PARA GRUPOS</div>
<div class="c" style="left:591.2px;top:255.48000000000002px;width:35.799999999999955px;color:#333;text-align:right;padding-right:1px;">79,00</div>
<div class="c" style="left:627px;top:255.48000000000002px;width:54.299999999999955px;color:#333;">NÃO FATURAR</div>
<div class="c" style="left:681.3px;top:255.48000000000002px;width:70.0px;color:#333;">INGRESSOS SITE COMUM</div>
<div class="c" style="left:751.3px;top:255.48000000000002px;width:70.20000000000005px;color:#333;">INGRESSOS</div>
<div class="c" style="left:821.5px;top:255.48000000000002px;width:123.89999999999998px;color:#333;">VENDA PARA GRUPOS</div>
<div class="c" style="left:945.4px;top:255.48000000000002px;width:70.0px;color:#333;"></div>
<div class="a" style="left:1070.5px;top:255.48000000000002px;width:30.0px;height:9.68px"><svg width="6" height="9" viewBox="0 0 6 9" style="position:absolute;left:50%;top:0;margin-left:-3px"><path d="M0.1 5.3 L1.3 4.5 L2.1 5.7 L4.3 3.7 L4.9 4.3 L2.1 7.5 Z" fill="#222"/></svg></div>
<div class="a" style="left:472.8px;top:255.48000000000002px;width:1px;height:9.68px;background:#d4d4d4"></div>
<div class="a" style="left:590.7px;top:255.48000000000002px;width:1px;height:9.68px;background:#d4d4d4"></div>
<div class="a" style="left:626.5px;top:255.48000000000002px;width:1px;height:9.68px;background:#d4d4d4"></div>
<div class="a" style="left:680.8px;top:255.48000000000002px;width:1px;height:9.68px;background:#d4d4d4"></div>
<div class="a" style="left:750.8px;top:255.48000000000002px;width:1px;height:9.68px;background:#d4d4d4"></div>
<div class="a" style="left:821.0px;top:255.48000000000002px;width:1px;height:9.68px;background:#d4d4d4"></div>
<div class="a" style="left:944.9px;top:255.48000000000002px;width:1px;height:9.68px;background:#d4d4d4"></div>
<div class="a" style="left:1014.9px;top:255.48000000000002px;width:1px;height:9.68px;background:#d4d4d4"></div>
<div class="a" style="left:1042.5px;top:255.48000000000002px;width:1px;height:9.68px;background:#d4d4d4"></div>
<div class="a" style="left:1070.0px;top:255.48000000000002px;width:1px;height:9.68px;background:#d4d4d4"></div>
<div class="a" style="left:1100.0px;top:255.48000000000002px;width:1px;height:9.68px;background:#d4d4d4"></div>
<div class="a" style="left:1130.1px;top:255.48000000000002px;width:1px;height:9.68px;background:#d4d4d4"></div>
<div class="a" style="left:1160.1px;top:255.48000000000002px;width:1px;height:9.68px;background:#d4d4d4"></div>
<div class="a" style="left:1190.3px;top:255.48000000000002px;width:1px;height:9.68px;background:#d4d4d4"></div>
<div class="c" style="left:427.5px;top:265.15999999999997px;width:45.80000000000001px;color:#333;">000008</div>
<div class="c" style="left:473.3px;top:265.15999999999997px;width:117.90000000000003px;color:#333;">VENDA COM RESTRIÇÃO DIÁRIA (SAB-DOM)</div>
<div class="c" style="left:591.2px;top:265.15999999999997px;width:35.799999999999955px;color:#333;text-align:right;padding-right:1px;">89,90</div>
<div class="c" style="left:627px;top:265.15999999999997px;width:54.299999999999955px;color:#333;">NÃO FATURAR</div>
<div class="c" style="left:681.3px;top:265.15999999999997px;width:70.0px;color:#333;">INGRESSOS SITE COMUM</div>
<div class="c" style="left:751.3px;top:265.15999999999997px;width:70.20000000000005px;color:#333;">INGRESSOS</div>
<div class="c" style="left:821.5px;top:265.15999999999997px;width:123.89999999999998px;color:#333;">VENDA COM RESTRIÇÃO DIÁRIA</div>
<div class="c" style="left:945.4px;top:265.15999999999997px;width:70.0px;color:#333;"></div>
<div class="a" style="left:1070.5px;top:265.15999999999997px;width:30.0px;height:9.68px"><svg width="6" height="9" viewBox="0 0 6 9" style="position:absolute;left:50%;top:0;margin-left:-3px"><path d="M0.1 5.3 L1.3 4.5 L2.1 5.7 L4.3 3.7 L4.9 4.3 L2.1 7.5 Z" fill="#222"/></svg></div>
<div class="a" style="left:1160.6px;top:265.15999999999997px;width:30.200000000000045px;height:9.68px"><svg width="6" height="9" viewBox="0 0 6 9" style="position:absolute;left:50%;top:0;margin-left:-3px"><path d="M0.1 5.3 L1.3 4.5 L2.1 5.7 L4.3 3.7 L4.9 4.3 L2.1 7.5 Z" fill="#222"/></svg></div>
<div class="a" style="left:472.8px;top:265.15999999999997px;width:1px;height:9.68px;background:#d4d4d4"></div>
<div class="a" style="left:590.7px;top:265.15999999999997px;width:1px;height:9.68px;background:#d4d4d4"></div>
<div class="a" style="left:626.5px;top:265.15999999999997px;width:1px;height:9.68px;background:#d4d4d4"></div>
<div class="a" style="left:680.8px;top:265.15999999999997px;width:1px;height:9.68px;background:#d4d4d4"></div>
<div class="a" style="left:750.8px;top:265.15999999999997px;width:1px;height:9.68px;background:#d4d4d4"></div>
<div class="a" style="left:821.0px;top:265.15999999999997px;width:1px;height:9.68px;background:#d4d4d4"></div>
<div class="a" style="left:944.9px;top:265.15999999999997px;width:1px;height:9.68px;background:#d4d4d4"></div>
<div class="a" style="left:1014.9px;top:265.15999999999997px;width:1px;height:9.68px;background:#d4d4d4"></div>
<div class="a" style="left:1042.5px;top:265.15999999999997px;width:1px;height:9.68px;background:#d4d4d4"></div>
<div class="a" style="left:1070.0px;top:265.15999999999997px;width:1px;height:9.68px;background:#d4d4d4"></div>
<div class="a" style="left:1100.0px;top:265.15999999999997px;width:1px;height:9.68px;background:#d4d4d4"></div>
<div class="a" style="left:1130.1px;top:265.15999999999997px;width:1px;height:9.68px;background:#d4d4d4"></div>
<div class="a" style="left:1160.1px;top:265.15999999999997px;width:1px;height:9.68px;background:#d4d4d4"></div>
<div class="a" style="left:1190.3px;top:265.15999999999997px;width:1px;height:9.68px;background:#d4d4d4"></div>
<div class="c" style="left:427.5px;top:274.84000000000003px;width:45.80000000000001px;color:#333;">000009</div>
<div class="c" style="left:473.3px;top:274.84000000000003px;width:117.90000000000003px;color:#333;">VENDA APENAS ANTECIPADA</div>
<div class="c" style="left:591.2px;top:274.84000000000003px;width:35.799999999999955px;color:#333;text-align:right;padding-right:1px;">99,99</div>
<div class="c" style="left:627px;top:274.84000000000003px;width:54.299999999999955px;color:#333;">NÃO FATURAR</div>
<div class="c" style="left:681.3px;top:274.84000000000003px;width:70.0px;color:#333;">INGRESSO SITE PROMO</div>
<div class="c" style="left:751.3px;top:274.84000000000003px;width:70.20000000000005px;color:#333;">INGRESSOS</div>
<div class="c" style="left:821.5px;top:274.84000000000003px;width:123.89999999999998px;color:#333;">VENDA APENAS ANTECIPADA</div>
<div class="c" style="left:945.4px;top:274.84000000000003px;width:70.0px;color:#333;"></div>
<div class="a" style="left:1070.5px;top:274.84000000000003px;width:30.0px;height:9.68px"><svg width="6" height="9" viewBox="0 0 6 9" style="position:absolute;left:50%;top:0;margin-left:-3px"><path d="M0.1 5.3 L1.3 4.5 L2.1 5.7 L4.3 3.7 L4.9 4.3 L2.1 7.5 Z" fill="#222"/></svg></div>
<div class="a" style="left:1160.6px;top:274.84000000000003px;width:30.200000000000045px;height:9.68px"><svg width="6" height="9" viewBox="0 0 6 9" style="position:absolute;left:50%;top:0;margin-left:-3px"><path d="M0.1 5.3 L1.3 4.5 L2.1 5.7 L4.3 3.7 L4.9 4.3 L2.1 7.5 Z" fill="#222"/></svg></div>
<div class="a" style="left:472.8px;top:274.84000000000003px;width:1px;height:9.68px;background:#d4d4d4"></div>
<div class="a" style="left:590.7px;top:274.84000000000003px;width:1px;height:9.68px;background:#d4d4d4"></div>
<div class="a" style="left:626.5px;top:274.84000000000003px;width:1px;height:9.68px;background:#d4d4d4"></div>
<div class="a" style="left:680.8px;top:274.84000000000003px;width:1px;height:9.68px;background:#d4d4d4"></div>
<div class="a" style="left:750.8px;top:274.84000000000003px;width:1px;height:9.68px;background:#d4d4d4"></div>
<div class="a" style="left:821.0px;top:274.84000000000003px;width:1px;height:9.68px;background:#d4d4d4"></div>
<div class="a" style="left:944.9px;top:274.84000000000003px;width:1px;height:9.68px;background:#d4d4d4"></div>
<div class="a" style="left:1014.9px;top:274.84000000000003px;width:1px;height:9.68px;background:#d4d4d4"></div>
<div class="a" style="left:1042.5px;top:274.84000000000003px;width:1px;height:9.68px;background:#d4d4d4"></div>
<div class="a" style="left:1070.0px;top:274.84000000000003px;width:1px;height:9.68px;background:#d4d4d4"></div>
<div class="a" style="left:1100.0px;top:274.84000000000003px;width:1px;height:9.68px;background:#d4d4d4"></div>
<div class="a" style="left:1130.1px;top:274.84000000000003px;width:1px;height:9.68px;background:#d4d4d4"></div>
<div class="a" style="left:1160.1px;top:274.84000000000003px;width:1px;height:9.68px;background:#d4d4d4"></div>
<div class="a" style="left:1190.3px;top:274.84000000000003px;width:1px;height:9.68px;background:#d4d4d4"></div>
<div class="c" style="left:427.5px;top:284.52px;width:45.80000000000001px;color:#333;">000010</div>
<div class="c" style="left:473.3px;top:284.52px;width:117.90000000000003px;color:#333;">VENDA APENAS PARA O DIA</div>
<div class="c" style="left:591.2px;top:284.52px;width:35.799999999999955px;color:#333;text-align:right;padding-right:1px;">100,00</div>
<div class="c" style="left:627px;top:284.52px;width:54.299999999999955px;color:#333;">NÃO FATURAR</div>
<div class="c" style="left:681.3px;top:284.52px;width:70.0px;color:#333;">INGRESSOS SITE COMUM</div>
<div class="c" style="left:751.3px;top:284.52px;width:70.20000000000005px;color:#333;">INGRESSOS</div>
<div class="c" style="left:821.5px;top:284.52px;width:123.89999999999998px;color:#333;">VENDA APENAS PARA O DIA</div>
<div class="c" style="left:945.4px;top:284.52px;width:70.0px;color:#333;"></div>
<div class="a" style="left:1070.5px;top:284.52px;width:30.0px;height:9.68px"><svg width="6" height="9" viewBox="0 0 6 9" style="position:absolute;left:50%;top:0;margin-left:-3px"><path d="M0.1 5.3 L1.3 4.5 L2.1 5.7 L4.3 3.7 L4.9 4.3 L2.1 7.5 Z" fill="#222"/></svg></div>
<div class="a" style="left:1160.6px;top:284.52px;width:30.200000000000045px;height:9.68px"><svg width="6" height="9" viewBox="0 0 6 9" style="position:absolute;left:50%;top:0;margin-left:-3px"><path d="M0.1 5.3 L1.3 4.5 L2.1 5.7 L4.3 3.7 L4.9 4.3 L2.1 7.5 Z" fill="#222"/></svg></div>
<div class="a" style="left:472.8px;top:284.52px;width:1px;height:9.68px;background:#d4d4d4"></div>
<div class="a" style="left:590.7px;top:284.52px;width:1px;height:9.68px;background:#d4d4d4"></div>
<div class="a" style="left:626.5px;top:284.52px;width:1px;height:9.68px;background:#d4d4d4"></div>
<div class="a" style="left:680.8px;top:284.52px;width:1px;height:9.68px;background:#d4d4d4"></div>
<div class="a" style="left:750.8px;top:284.52px;width:1px;height:9.68px;background:#d4d4d4"></div>
<div class="a" style="left:821.0px;top:284.52px;width:1px;height:9.68px;background:#d4d4d4"></div>
<div class="a" style="left:944.9px;top:284.52px;width:1px;height:9.68px;background:#d4d4d4"></div>
<div class="a" style="left:1014.9px;top:284.52px;width:1px;height:9.68px;background:#d4d4d4"></div>
<div class="a" style="left:1042.5px;top:284.52px;width:1px;height:9.68px;background:#d4d4d4"></div>
<div class="a" style="left:1070.0px;top:284.52px;width:1px;height:9.68px;background:#d4d4d4"></div>
<div class="a" style="left:1100.0px;top:284.52px;width:1px;height:9.68px;background:#d4d4d4"></div>
<div class="a" style="left:1130.1px;top:284.52px;width:1px;height:9.68px;background:#d4d4d4"></div>
<div class="a" style="left:1160.1px;top:284.52px;width:1px;height:9.68px;background:#d4d4d4"></div>
<div class="a" style="left:1190.3px;top:284.52px;width:1px;height:9.68px;background:#d4d4d4"></div>
<div class="c" style="left:427.5px;top:294.2px;width:45.80000000000001px;color:#333;">000011</div>
<div class="c" style="left:473.3px;top:294.2px;width:117.90000000000003px;color:#333;">VENDA PARA GRUPOS COM SESSÃO e</div>
<div class="c" style="left:591.2px;top:294.2px;width:35.799999999999955px;color:#333;text-align:right;padding-right:1px;">79,00</div>
<div class="c" style="left:627px;top:294.2px;width:54.299999999999955px;color:#333;">NÃO FATURAR</div>
<div class="c" style="left:681.3px;top:294.2px;width:70.0px;color:#333;">INGRESSOS SITE COMUM</div>
<div class="c" style="left:751.3px;top:294.2px;width:70.20000000000005px;color:#333;">INGRESSOS</div>
<div class="c" style="left:821.5px;top:294.2px;width:123.89999999999998px;color:#333;">VENDA PARA GRUPOS COM SESSÃO</div>
<div class="c" style="left:945.4px;top:294.2px;width:70.0px;color:#333;">SESSÃO EM GRUPO</div>
<div class="a" style="left:1070.5px;top:294.2px;width:30.0px;height:9.68px"><svg width="6" height="9" viewBox="0 0 6 9" style="position:absolute;left:50%;top:0;margin-left:-3px"><path d="M0.1 5.3 L1.3 4.5 L2.1 5.7 L4.3 3.7 L4.9 4.3 L2.1 7.5 Z" fill="#222"/></svg></div>
<div class="a" style="left:1160.6px;top:294.2px;width:30.200000000000045px;height:9.68px"><svg width="6" height="9" viewBox="0 0 6 9" style="position:absolute;left:50%;top:0;margin-left:-3px"><path d="M0.1 5.3 L1.3 4.5 L2.1 5.7 L4.3 3.7 L4.9 4.3 L2.1 7.5 Z" fill="#222"/></svg></div>
<div class="a" style="left:472.8px;top:294.2px;width:1px;height:9.68px;background:#d4d4d4"></div>
<div class="a" style="left:590.7px;top:294.2px;width:1px;height:9.68px;background:#d4d4d4"></div>
<div class="a" style="left:626.5px;top:294.2px;width:1px;height:9.68px;background:#d4d4d4"></div>
<div class="a" style="left:680.8px;top:294.2px;width:1px;height:9.68px;background:#d4d4d4"></div>
<div class="a" style="left:750.8px;top:294.2px;width:1px;height:9.68px;background:#d4d4d4"></div>
<div class="a" style="left:821.0px;top:294.2px;width:1px;height:9.68px;background:#d4d4d4"></div>
<div class="a" style="left:944.9px;top:294.2px;width:1px;height:9.68px;background:#d4d4d4"></div>
<div class="a" style="left:1014.9px;top:294.2px;width:1px;height:9.68px;background:#d4d4d4"></div>
<div class="a" style="left:1042.5px;top:294.2px;width:1px;height:9.68px;background:#d4d4d4"></div>
<div class="a" style="left:1070.0px;top:294.2px;width:1px;height:9.68px;background:#d4d4d4"></div>
<div class="a" style="left:1100.0px;top:294.2px;width:1px;height:9.68px;background:#d4d4d4"></div>
<div class="a" style="left:1130.1px;top:294.2px;width:1px;height:9.68px;background:#d4d4d4"></div>
<div class="a" style="left:1160.1px;top:294.2px;width:1px;height:9.68px;background:#d4d4d4"></div>
<div class="a" style="left:1190.3px;top:294.2px;width:1px;height:9.68px;background:#d4d4d4"></div>
<div class="c" style="left:427.5px;top:303.88px;width:45.80000000000001px;color:#333;">000012</div>
<div class="c" style="left:473.3px;top:303.88px;width:117.90000000000003px;color:#333;">VENDA PARA GRUPOS COM SESSÃO e</div>
<div class="c" style="left:591.2px;top:303.88px;width:35.799999999999955px;color:#333;text-align:right;padding-right:1px;">59,90</div>
<div class="c" style="left:627px;top:303.88px;width:54.299999999999955px;color:#333;">NÃO FATURAR</div>
<div class="c" style="left:681.3px;top:303.88px;width:70.0px;color:#333;">INGRESSOS SITE COMUM</div>
<div class="c" style="left:751.3px;top:303.88px;width:70.20000000000005px;color:#333;">INGRESSOS</div>
<div class="c" style="left:821.5px;top:303.88px;width:123.89999999999998px;color:#333;">VENDA PARA GRUPOS COM SESSÃO</div>
<div class="c" style="left:945.4px;top:303.88px;width:70.0px;color:#333;">SESSÃO EM GRUPO</div>
<div class="a" style="left:1070.5px;top:303.88px;width:30.0px;height:9.68px"><svg width="6" height="9" viewBox="0 0 6 9" style="position:absolute;left:50%;top:0;margin-left:-3px"><path d="M0.1 5.3 L1.3 4.5 L2.1 5.7 L4.3 3.7 L4.9 4.3 L2.1 7.5 Z" fill="#222"/></svg></div>
<div class="a" style="left:1160.6px;top:303.88px;width:30.200000000000045px;height:9.68px"><svg width="6" height="9" viewBox="0 0 6 9" style="position:absolute;left:50%;top:0;margin-left:-3px"><path d="M0.1 5.3 L1.3 4.5 L2.1 5.7 L4.3 3.7 L4.9 4.3 L2.1 7.5 Z" fill="#222"/></svg></div>
<div class="a" style="left:472.8px;top:303.88px;width:1px;height:9.68px;background:#d4d4d4"></div>
<div class="a" style="left:590.7px;top:303.88px;width:1px;height:9.68px;background:#d4d4d4"></div>
<div class="a" style="left:626.5px;top:303.88px;width:1px;height:9.68px;background:#d4d4d4"></div>
<div class="a" style="left:680.8px;top:303.88px;width:1px;height:9.68px;background:#d4d4d4"></div>
<div class="a" style="left:750.8px;top:303.88px;width:1px;height:9.68px;background:#d4d4d4"></div>
<div class="a" style="left:821.0px;top:303.88px;width:1px;height:9.68px;background:#d4d4d4"></div>
<div class="a" style="left:944.9px;top:303.88px;width:1px;height:9.68px;background:#d4d4d4"></div>
<div class="a" style="left:1014.9px;top:303.88px;width:1px;height:9.68px;background:#d4d4d4"></div>
<div class="a" style="left:1042.5px;top:303.88px;width:1px;height:9.68px;background:#d4d4d4"></div>
<div class="a" style="left:1070.0px;top:303.88px;width:1px;height:9.68px;background:#d4d4d4"></div>
<div class="a" style="left:1100.0px;top:303.88px;width:1px;height:9.68px;background:#d4d4d4"></div>
<div class="a" style="left:1130.1px;top:303.88px;width:1px;height:9.68px;background:#d4d4d4"></div>
<div class="a" style="left:1160.1px;top:303.88px;width:1px;height:9.68px;background:#d4d4d4"></div>
<div class="a" style="left:1190.3px;top:303.88px;width:1px;height:9.68px;background:#d4d4d4"></div>
<div class="c" style="left:427.5px;top:313.56px;width:45.80000000000001px;color:#333;">000013</div>
<div class="c" style="left:473.3px;top:313.56px;width:117.90000000000003px;color:#333;">VENDA DE COMBO</div>
<div class="c" style="left:591.2px;top:313.56px;width:35.799999999999955px;color:#333;text-align:right;padding-right:1px;"></div>
<div class="c" style="left:627px;top:313.56px;width:54.299999999999955px;color:#333;">NÃO FATURAR</div>
<div class="c" style="left:681.3px;top:313.56px;width:70.0px;color:#333;">INGRESSOS SITE COMUM</div>
<div class="c" style="left:751.3px;top:313.56px;width:70.20000000000005px;color:#333;">INGRESSOS</div>
<div class="c" style="left:821.5px;top:313.56px;width:123.89999999999998px;color:#333;">VENDA DE COMBO</div>
<div class="c" style="left:945.4px;top:313.56px;width:70.0px;color:#333;"></div>
<div class="a" style="left:1015.4px;top:313.56px;width:27.600000000000023px;height:9.68px"><svg width="6" height="9" viewBox="0 0 6 9" style="position:absolute;left:50%;top:0;margin-left:-3px"><path d="M0.1 5.3 L1.3 4.5 L2.1 5.7 L4.3 3.7 L4.9 4.3 L2.1 7.5 Z" fill="#222"/></svg></div>
<div class="a" style="left:1070.5px;top:313.56px;width:30.0px;height:9.68px"><svg width="6" height="9" viewBox="0 0 6 9" style="position:absolute;left:50%;top:0;margin-left:-3px"><path d="M0.1 5.3 L1.3 4.5 L2.1 5.7 L4.3 3.7 L4.9 4.3 L2.1 7.5 Z" fill="#222"/></svg></div>
<div class="a" style="left:1160.6px;top:313.56px;width:30.200000000000045px;height:9.68px"><svg width="6" height="9" viewBox="0 0 6 9" style="position:absolute;left:50%;top:0;margin-left:-3px"><path d="M0.1 5.3 L1.3 4.5 L2.1 5.7 L4.3 3.7 L4.9 4.3 L2.1 7.5 Z" fill="#222"/></svg></div>
<div class="a" style="left:472.8px;top:313.56px;width:1px;height:9.68px;background:#d4d4d4"></div>
<div class="a" style="left:590.7px;top:313.56px;width:1px;height:9.68px;background:#d4d4d4"></div>
<div class="a" style="left:626.5px;top:313.56px;width:1px;height:9.68px;background:#d4d4d4"></div>
<div class="a" style="left:680.8px;top:313.56px;width:1px;height:9.68px;background:#d4d4d4"></div>
<div class="a" style="left:750.8px;top:313.56px;width:1px;height:9.68px;background:#d4d4d4"></div>
<div class="a" style="left:821.0px;top:313.56px;width:1px;height:9.68px;background:#d4d4d4"></div>
<div class="a" style="left:944.9px;top:313.56px;width:1px;height:9.68px;background:#d4d4d4"></div>
<div class="a" style="left:1014.9px;top:313.56px;width:1px;height:9.68px;background:#d4d4d4"></div>
<div class="a" style="left:1042.5px;top:313.56px;width:1px;height:9.68px;background:#d4d4d4"></div>
<div class="a" style="left:1070.0px;top:313.56px;width:1px;height:9.68px;background:#d4d4d4"></div>
<div class="a" style="left:1100.0px;top:313.56px;width:1px;height:9.68px;background:#d4d4d4"></div>
<div class="a" style="left:1130.1px;top:313.56px;width:1px;height:9.68px;background:#d4d4d4"></div>
<div class="a" style="left:1160.1px;top:313.56px;width:1px;height:9.68px;background:#d4d4d4"></div>
<div class="a" style="left:1190.3px;top:313.56px;width:1px;height:9.68px;background:#d4d4d4"></div>
<div class="c" style="left:427.5px;top:323.24px;width:45.80000000000001px;color:#333;">000014</div>
<div class="c" style="left:473.3px;top:323.24px;width:117.90000000000003px;color:#333;">AREA VIP MEIA ENTRADA</div>
<div class="c" style="left:591.2px;top:323.24px;width:35.799999999999955px;color:#333;text-align:right;padding-right:1px;"></div>
<div class="c" style="left:627px;top:323.24px;width:54.299999999999955px;color:#333;">NÃO FATURAR</div>
<div class="c" style="left:681.3px;top:323.24px;width:70.0px;color:#333;">BILHETERIA MEIA ENTRADA</div>
<div class="c" style="left:751.3px;top:323.24px;width:70.20000000000005px;color:#333;">INGRESSOS</div>
<div class="c" style="left:821.5px;top:323.24px;width:123.89999999999998px;color:#333;">PARK AQUA AREA VIP</div>
<div class="c" style="left:945.4px;top:323.24px;width:70.0px;color:#333;"></div>
<div class="a" style="left:1070.5px;top:323.24px;width:30.0px;height:9.68px"><svg width="6" height="9" viewBox="0 0 6 9" style="position:absolute;left:50%;top:0;margin-left:-3px"><path d="M0.1 5.3 L1.3 4.5 L2.1 5.7 L4.3 3.7 L4.9 4.3 L2.1 7.5 Z" fill="#222"/></svg></div>
<div class="a" style="left:1160.6px;top:323.24px;width:30.200000000000045px;height:9.68px"><svg width="6" height="9" viewBox="0 0 6 9" style="position:absolute;left:50%;top:0;margin-left:-3px"><path d="M0.1 5.3 L1.3 4.5 L2.1 5.7 L4.3 3.7 L4.9 4.3 L2.1 7.5 Z" fill="#222"/></svg></div>
<div class="a" style="left:472.8px;top:323.24px;width:1px;height:9.68px;background:#d4d4d4"></div>
<div class="a" style="left:590.7px;top:323.24px;width:1px;height:9.68px;background:#d4d4d4"></div>
<div class="a" style="left:626.5px;top:323.24px;width:1px;height:9.68px;background:#d4d4d4"></div>
<div class="a" style="left:680.8px;top:323.24px;width:1px;height:9.68px;background:#d4d4d4"></div>
<div class="a" style="left:750.8px;top:323.24px;width:1px;height:9.68px;background:#d4d4d4"></div>
<div class="a" style="left:821.0px;top:323.24px;width:1px;height:9.68px;background:#d4d4d4"></div>
<div class="a" style="left:944.9px;top:323.24px;width:1px;height:9.68px;background:#d4d4d4"></div>
<div class="a" style="left:1014.9px;top:323.24px;width:1px;height:9.68px;background:#d4d4d4"></div>
<div class="a" style="left:1042.5px;top:323.24px;width:1px;height:9.68px;background:#d4d4d4"></div>
<div class="a" style="left:1070.0px;top:323.24px;width:1px;height:9.68px;background:#d4d4d4"></div>
<div class="a" style="left:1100.0px;top:323.24px;width:1px;height:9.68px;background:#d4d4d4"></div>
<div class="a" style="left:1130.1px;top:323.24px;width:1px;height:9.68px;background:#d4d4d4"></div>
<div class="a" style="left:1160.1px;top:323.24px;width:1px;height:9.68px;background:#d4d4d4"></div>
<div class="a" style="left:1190.3px;top:323.24px;width:1px;height:9.68px;background:#d4d4d4"></div>
<div class="a" style="left:427.5px;top:341.9px;width:800px;height:0.9px;background:#c8c8c8"></div>
<div class="a" style="left:427.5px;top:351.58000000000004px;width:800px;height:0.9px;background:#c8c8c8"></div>
<div class="a" style="left:427.5px;top:361.26px;width:800px;height:0.9px;background:#c8c8c8"></div>
<div class="a" style="left:427.5px;top:370.94000000000005px;width:800px;height:0.9px;background:#c8c8c8"></div>
<div class="a" style="left:427.5px;top:380.62px;width:800px;height:0.9px;background:#c8c8c8"></div>
<div class="a" style="left:427.5px;top:390.3px;width:800px;height:0.9px;background:#c8c8c8"></div>
<div class="a" style="left:427.5px;top:399.98px;width:800px;height:0.9px;background:#c8c8c8"></div>
<div class="a" style="left:427.5px;top:409.66px;width:800px;height:0.9px;background:#c8c8c8"></div>
<div class="a" style="left:427.5px;top:419.34000000000003px;width:800px;height:0.9px;background:#c8c8c8"></div>
<div class="a" style="left:427.5px;top:429.02px;width:800px;height:0.9px;background:#c8c8c8"></div>
<div class="a" style="left:427.5px;top:438.70000000000005px;width:800px;height:0.9px;background:#c8c8c8"></div>
<div class="a" style="left:427.5px;top:448.38px;width:800px;height:0.9px;background:#c8c8c8"></div>
<div class="a" style="left:427.5px;top:458.06000000000006px;width:800px;height:0.9px;background:#c8c8c8"></div>
<div class="a" style="left:427.5px;top:467.74px;width:800px;height:0.9px;background:#c8c8c8"></div>
<div class="a" style="left:427.5px;top:477.41999999999996px;width:800px;height:0.9px;background:#c8c8c8"></div>
<div class="a" style="left:427.5px;top:487.1px;width:800px;height:0.9px;background:#c8c8c8"></div>
<div class="a" style="left:472.8px;top:332.91999999999996px;width:1px;height:200px;background:#cdcdcd"></div>
<div class="a" style="left:590.7px;top:332.91999999999996px;width:1px;height:200px;background:#cdcdcd"></div>
<div class="a" style="left:626.5px;top:332.91999999999996px;width:1px;height:200px;background:#cdcdcd"></div>
<div class="a" style="left:680.8px;top:332.91999999999996px;width:1px;height:200px;background:#cdcdcd"></div>
<div class="a" style="left:750.8px;top:332.91999999999996px;width:1px;height:200px;background:#cdcdcd"></div>
<div class="a" style="left:821.0px;top:332.91999999999996px;width:1px;height:200px;background:#cdcdcd"></div>
<div class="a" style="left:944.9px;top:332.91999999999996px;width:1px;height:200px;background:#cdcdcd"></div>
<div class="a" style="left:1014.9px;top:332.91999999999996px;width:1px;height:200px;background:#cdcdcd"></div>
<div class="a" style="left:1042.5px;top:332.91999999999996px;width:1px;height:200px;background:#cdcdcd"></div>
<div class="a" style="left:1070.0px;top:332.91999999999996px;width:1px;height:200px;background:#cdcdcd"></div>
<div class="a" style="left:1100.0px;top:332.91999999999996px;width:1px;height:200px;background:#cdcdcd"></div>
<div class="a" style="left:1130.1px;top:332.91999999999996px;width:1px;height:200px;background:#cdcdcd"></div>
<div class="a" style="left:1160.1px;top:332.91999999999996px;width:1px;height:200px;background:#cdcdcd"></div>
<div class="a" style="left:1190.3px;top:332.91999999999996px;width:1px;height:200px;background:#cdcdcd"></div>
<div class="a" style="left:422px;top:197.4px;width:5.5px;height:9.68px;background:#f2f2f2;border-bottom:1px solid #5e5e5e;border-right:1.4px solid #8a8a8a"></div>
<div class="a" style="left:422px;top:207.08px;width:5.5px;height:9.68px;background:#f2f2f2;border-bottom:1px solid #5e5e5e;border-right:1.4px solid #8a8a8a"></div>
<div class="a" style="left:422px;top:216.76px;width:5.5px;height:9.68px;background:#f2f2f2;border-bottom:1px solid #5e5e5e;border-right:1.4px solid #8a8a8a"></div>
<div class="a" style="left:422px;top:226.44px;width:5.5px;height:9.68px;background:#f2f2f2;border-bottom:1px solid #5e5e5e;border-right:1.4px solid #8a8a8a"></div>
<div class="a" style="left:422px;top:236.12px;width:5.5px;height:9.68px;background:#f2f2f2;border-bottom:1px solid #5e5e5e;border-right:1.4px solid #8a8a8a"></div>
<div class="a" style="left:422px;top:245.8px;width:5.5px;height:9.68px;background:#f2f2f2;border-bottom:1px solid #5e5e5e;border-right:1.4px solid #8a8a8a"></div>
<div class="a" style="left:422px;top:255.48000000000002px;width:5.5px;height:9.68px;background:#f2f2f2;border-bottom:1px solid #5e5e5e;border-right:1.4px solid #8a8a8a"></div>
<div class="a" style="left:422px;top:265.15999999999997px;width:5.5px;height:9.68px;background:#f2f2f2;border-bottom:1px solid #5e5e5e;border-right:1.4px solid #8a8a8a"></div>
<div class="a" style="left:422px;top:274.84000000000003px;width:5.5px;height:9.68px;background:#f2f2f2;border-bottom:1px solid #5e5e5e;border-right:1.4px solid #8a8a8a"></div>
<div class="a" style="left:422px;top:284.52px;width:5.5px;height:9.68px;background:#f2f2f2;border-bottom:1px solid #5e5e5e;border-right:1.4px solid #8a8a8a"></div>
<div class="a" style="left:422px;top:294.2px;width:5.5px;height:9.68px;background:#f2f2f2;border-bottom:1px solid #5e5e5e;border-right:1.4px solid #8a8a8a"></div>
<div class="a" style="left:422px;top:303.88px;width:5.5px;height:9.68px;background:#f2f2f2;border-bottom:1px solid #5e5e5e;border-right:1.4px solid #8a8a8a"></div>
<div class="a" style="left:422px;top:313.56px;width:5.5px;height:9.68px;background:#f2f2f2;border-bottom:1px solid #5e5e5e;border-right:1.4px solid #8a8a8a"></div>
<div class="a" style="left:422px;top:323.24px;width:5.5px;height:9.68px;background:#f2f2f2;border-bottom:1px solid #5e5e5e;border-right:1.4px solid #8a8a8a"></div>
<div class="a" style="left:422px;top:332.91999999999996px;width:5.5px;height:9.68px;background:#f2f2f2;border-bottom:1px solid #5e5e5e;border-right:1.4px solid #8a8a8a"></div>
<div class="a" style="left:422px;top:342.6px;width:5.5px;height:9.68px;background:#f2f2f2;border-bottom:1px solid #5e5e5e;border-right:1.4px solid #8a8a8a"></div>
<div class="a" style="left:422px;top:352.28px;width:5.5px;height:9.68px;background:#f2f2f2;border-bottom:1px solid #5e5e5e;border-right:1.4px solid #8a8a8a"></div>
<div class="a" style="left:422px;top:361.96000000000004px;width:5.5px;height:9.68px;background:#f2f2f2;border-bottom:1px solid #5e5e5e;border-right:1.4px solid #8a8a8a"></div>
<div class="a" style="left:422px;top:371.64px;width:5.5px;height:9.68px;background:#f2f2f2;border-bottom:1px solid #5e5e5e;border-right:1.4px solid #8a8a8a"></div>
<div class="a" style="left:422px;top:381.32px;width:5.5px;height:9.68px;background:#f2f2f2;border-bottom:1px solid #5e5e5e;border-right:1.4px solid #8a8a8a"></div>
<div class="a" style="left:422px;top:391.0px;width:5.5px;height:9.68px;background:#f2f2f2;border-bottom:1px solid #5e5e5e;border-right:1.4px solid #8a8a8a"></div>
<div class="a" style="left:422px;top:400.68px;width:5.5px;height:9.68px;background:#f2f2f2;border-bottom:1px solid #5e5e5e;border-right:1.4px solid #8a8a8a"></div>
<div class="a" style="left:422px;top:410.36px;width:5.5px;height:9.68px;background:#f2f2f2;border-bottom:1px solid #5e5e5e;border-right:1.4px solid #8a8a8a"></div>
<div class="a" style="left:422px;top:420.03999999999996px;width:5.5px;height:9.68px;background:#f2f2f2;border-bottom:1px solid #5e5e5e;border-right:1.4px solid #8a8a8a"></div>
<div class="a" style="left:422px;top:429.72px;width:5.5px;height:9.68px;background:#f2f2f2;border-bottom:1px solid #5e5e5e;border-right:1.4px solid #8a8a8a"></div>
<div class="a" style="left:422px;top:439.4px;width:5.5px;height:9.68px;background:#f2f2f2;border-bottom:1px solid #5e5e5e;border-right:1.4px solid #8a8a8a"></div>
<div class="a" style="left:422px;top:449.08000000000004px;width:5.5px;height:9.68px;background:#f2f2f2;border-bottom:1px solid #5e5e5e;border-right:1.4px solid #8a8a8a"></div>
<div class="a" style="left:422px;top:458.76px;width:5.5px;height:9.68px;background:#f2f2f2;border-bottom:1px solid #5e5e5e;border-right:1.4px solid #8a8a8a"></div>
<div class="a" style="left:422px;top:468.43999999999994px;width:5.5px;height:9.68px;background:#f2f2f2;border-bottom:1px solid #5e5e5e;border-right:1.4px solid #8a8a8a"></div>
<div class="a" style="left:422px;top:478.12px;width:5.5px;height:9.68px;background:#f2f2f2;border-bottom:1px solid #5e5e5e;border-right:1.4px solid #8a8a8a"></div>
<div class="a" style="left:423.8px;top:202.0px;width:0;height:0;border-left:3px solid #000;border-top:2.5px solid transparent;border-bottom:2.5px solid transparent"></div>
<div class="a" style="left:529.5px;top:316px;width:125px;height:170px;background:#f0f0f0;border:1px solid #a0a0a0;box-shadow:1px 1px 1px rgba(0,0,0,0.35)"></div>
<div class="a" style="left:530.6px;top:327.8px;width:122px;height:10.3px;background:#0078d7"></div>
<div class="mi" style="top:318.3px;"><b><u>A</u>lterar</b></div>
<div class="mi" style="top:328px;color:#fff"><u>I</u>ncluir</div>
<div class="mi" style="top:338.2px;">Incl<u>u</u>ir Copiando</div>
<div class="mi" style="top:348.3px;"><u>E</u>xcluir</div>
<div class="mi" style="top:358.4px;"><u>Z</u>oom</div>
<div class="mi" style="top:372.4px;"><u>D</u>esativar/Ativar</div>
<div class="mi" style="top:386.4px;">Combo de produtos</div>
<div class="mi" style="top:396.6px;">Combo de produtos selecionáveis</div>
<div class="mi" style="top:407.1px;">Utilização em combo</div>
<div class="mi" style="top:420.5px;"><i>Configuração de Layout</i></div>
<div class="mi" style="top:434.6px;">Configurar <u>t</u>ributação</div>
<div class="mi" style="top:445px;"><i>Configurar <u>s</u>plit</i></div>
<div class="mi" style="top:458.6px;"><u>G</u>erenciar e-commerce</div>
<div class="mi" style="top:468.7px;">Ticket Store</div>
<div class="ms" style="top:370.1px"></div>
<div class="ms" style="top:384.8px"></div>
<div class="ms" style="top:419px"></div>
<div class="ms" style="top:432.7px"></div>
<div class="ms" style="top:457.2px"></div>
<div class="a" style="left:646px;top:472px;width:0;height:0;border-left:2.5px solid #333;border-top:2.5px solid transparent;border-bottom:2.5px solid transparent"></div>
<svg class="a" style="left:0;top:0" width="1195" height="476"><path d="M577.1 328.1 L590 331.4 L586.2 335.3 L598.5 343.6 L596.5 346 L584.2 337.7 L582.3 340.2 Z" fill="#e3191b"/></svg>
</body></html>
